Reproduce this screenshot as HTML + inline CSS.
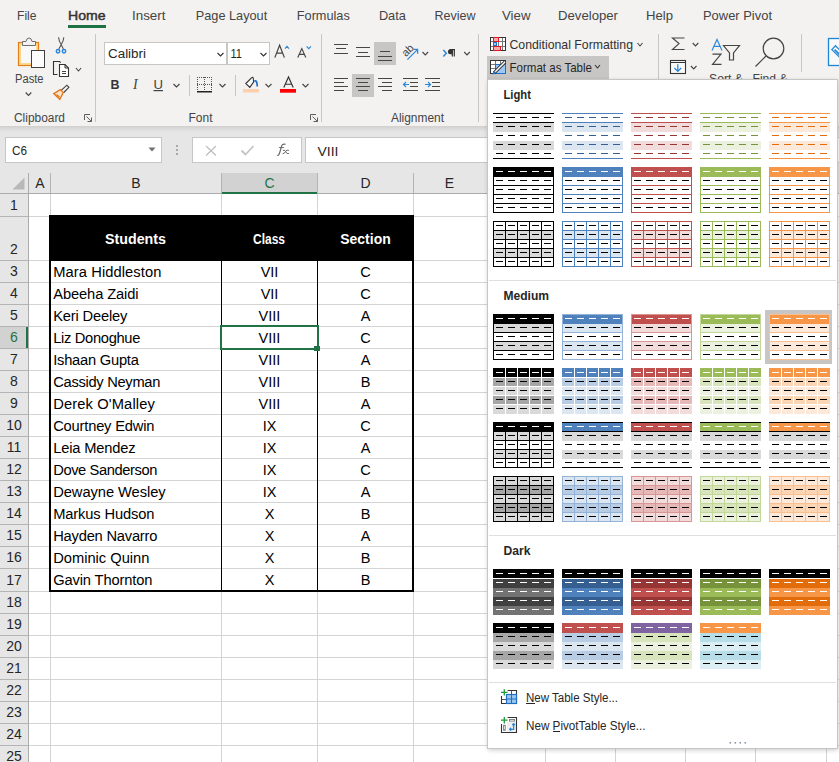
<!DOCTYPE html>
<html><head><meta charset="utf-8"><style>
html,body{margin:0;padding:0;width:839px;height:762px;overflow:hidden;background:#e6e6e6}
svg{position:absolute;left:0;top:0;display:block}
svg{font-family:"Liberation Sans",sans-serif}
</style></head><body>
<svg width="839" height="762" viewBox="0 0 839 762" shape-rendering="auto">
<rect x="0" y="0" width="839" height="762" fill="#e6e6e6" />
<rect x="0" y="0" width="839" height="126" fill="#f3f2f1" />
<defs><linearGradient id="rsh" x1="0" y1="0" x2="0" y2="1"><stop offset="0" stop-color="#d2d0ce"/><stop offset="1" stop-color="#e6e6e6"/></linearGradient><filter id="psh" x="-5%" y="-5%" width="115%" height="115%"><feGaussianBlur stdDeviation="2.5"/></filter></defs>
<rect x="0" y="126" width="839" height="6" fill="url(#rsh)" />
<text x="17.0" y="20" font-size="13" fill="#444444" textLength="19.5" lengthAdjust="spacingAndGlyphs" >File</text>
<text x="68.0" y="20" font-size="13" fill="#333333" textLength="37.5" lengthAdjust="spacingAndGlyphs" stroke="#333333" stroke-width="0.45">Home</text>
<text x="132.0" y="20" font-size="13" fill="#444444" textLength="33.5" lengthAdjust="spacingAndGlyphs" >Insert</text>
<text x="195.8" y="20" font-size="13" fill="#444444" textLength="71.4" lengthAdjust="spacingAndGlyphs" >Page Layout</text>
<text x="296.8" y="20" font-size="13" fill="#444444" textLength="53.0" lengthAdjust="spacingAndGlyphs" >Formulas</text>
<text x="378.9" y="20" font-size="13" fill="#444444" textLength="27.0" lengthAdjust="spacingAndGlyphs" >Data</text>
<text x="434.5" y="20" font-size="13" fill="#444444" textLength="41" lengthAdjust="spacingAndGlyphs" >Review</text>
<text x="502.0" y="20" font-size="13" fill="#444444" textLength="28.5" lengthAdjust="spacingAndGlyphs" >View</text>
<text x="558.0" y="20" font-size="13" fill="#444444" textLength="60.0" lengthAdjust="spacingAndGlyphs" >Developer</text>
<text x="646.0" y="20" font-size="13" fill="#444444" textLength="27.0" lengthAdjust="spacingAndGlyphs" >Help</text>
<text x="703.0" y="20" font-size="13" fill="#444444" textLength="69.0" lengthAdjust="spacingAndGlyphs" >Power Pivot</text>
<rect x="68" y="25" width="38" height="3" fill="#1e7145" />
<text x="14" y="122" font-size="12" fill="#444444" textLength="51" lengthAdjust="spacingAndGlyphs" >Clipboard</text>
<text x="188.5" y="121.5" font-size="12" fill="#444444" textLength="24" lengthAdjust="spacingAndGlyphs" >Font</text>
<text x="391" y="121.5" font-size="12" fill="#444444" textLength="53" lengthAdjust="spacingAndGlyphs" >Alignment</text>
<rect x="95" y="34" width="1" height="88" fill="#c8c6c4" />
<rect x="321" y="34" width="1" height="88" fill="#c8c6c4" />
<rect x="478" y="34" width="1" height="88" fill="#c8c6c4" />
<rect x="658" y="34" width="1" height="45" fill="#c8c6c4" />
<rect x="801" y="34" width="1" height="38" fill="#c8c6c4" />
<path d="M84.5 120 V114.5 H90" stroke="#605e5c" fill="none" stroke-width="1" />
<path d="M86.5 116.5 L91.5 121.5 M91.5 117.5 V121.5 H87.5" stroke="#605e5c" fill="none" stroke-width="1" />
<path d="M310.5 120 V114.5 H316" stroke="#605e5c" fill="none" stroke-width="1" />
<path d="M312.5 116.5 L317.5 121.5 M317.5 117.5 V121.5 H313.5" stroke="#605e5c" fill="none" stroke-width="1" />
<rect x="18.5" y="42.5" width="20" height="23" fill="#fcd98e" stroke="#e3801c" stroke-width="1.2"/>
<rect x="21" y="45" width="15" height="18" fill="#f8f8f8" />
<path d="M22.5 45.5 V41.5 H26 Q26.5 38 29 38 Q31.5 38 32 41.5 H35.5 V45.5 Z" stroke="#6e6e6e" fill="#f3f2f1" stroke-width="1" />
<rect x="31.5" y="50.5" width="13" height="17" fill="#fcfcfc" stroke="#404040" stroke-width="1"/>
<text x="15" y="83" font-size="12.5" fill="#444444" textLength="28.5" lengthAdjust="spacingAndGlyphs" >Paste</text>
<path d="M25.7 92.5 L28.5 95.5 L31.3 92.5" stroke="#444" fill="none" stroke-width="1.1" />
<path d="M58.6 37.3 Q58.8 41 61 44.2 L63.4 49 M63.8 37.3 Q63.6 41 61.4 44.2 L58.8 49" stroke="#555" fill="none" stroke-width="1.1" />
<circle cx="58" cy="51.2" r="1.7" fill="none" stroke="#2b88d8" stroke-width="1.5"/><circle cx="64" cy="51.2" r="1.7" fill="none" stroke="#2b88d8" stroke-width="1.5"/>
<path d="M57.5 74.5 H53.5 V61.5 H59.5 L60.7 62.7" stroke="#333" fill="none" stroke-width="1.1" />
<path d="M59.5 64.5 H65 L68.5 68 V76.5 H59.5 Z" stroke="#333" fill="#fff" stroke-width="1.1" />
<path d="M65 64.5 V68 H68.5" stroke="#333" fill="none" stroke-width="1" />
<rect x="62" y="71" width="4" height="1" fill="#444" />
<rect x="62" y="73" width="4" height="1" fill="#444" />
<path d="M75.9 68.0 L78.5 71.0 L81.1 68.0" stroke="#444" fill="none" stroke-width="1.1" />
<path d="M53.8 93.6 L60.3 89.6 L63.2 92.6 L59.8 99.3 Z" stroke="#e07a1f" fill="#fbe3cc" stroke-width="1.4" />
<path d="M56.5 94.5 L59.5 97" stroke="#e07a1f" fill="none" stroke-width="1.2" />
<path d="M61.5 90.2 L66.8 85.2 L68.9 87.3 L63.8 92.5" stroke="#444" fill="none" stroke-width="1.15" />
<rect x="104.5" y="42.5" width="122" height="22" fill="#ffffff" stroke="#c8c6c4" stroke-width="1"/>
<text x="108" y="58" font-size="12.5" fill="#262626" textLength="38" lengthAdjust="spacingAndGlyphs" >Calibri</text>
<path d="M217.5 53.0 L220.5 56.0 L223.5 53.0" stroke="#333" fill="none" stroke-width="1.1" />
<rect x="227.5" y="42.5" width="42" height="22" fill="#ffffff" stroke="#c8c6c4" stroke-width="1"/>
<text x="230.5" y="58" font-size="12.5" fill="#262626" textLength="11.5" lengthAdjust="spacingAndGlyphs" >11</text>
<path d="M260.5 53.0 L263.5 56.0 L266.5 53.0" stroke="#333" fill="none" stroke-width="1.1" />
<path d="M274.8 57.6 L279.6 45.2 L284.4 57.6 M276.5 53.2 H282.7" stroke="#444" fill="none" stroke-width="1.2" />
<path d="M285 48.6 L287 46.3 L289 48.6" stroke="#2b88d8" fill="none" stroke-width="1.2" />
<path d="M297.8 57.6 L301.8 48.6 L305.8 57.6 M299.2 54.4 H304.4" stroke="#444" fill="none" stroke-width="1.15" />
<path d="M306.6 46.4 L308.8 48.6 L311 46.4" stroke="#2b88d8" fill="none" stroke-width="1.2" />
<text x="110.5" y="89" font-size="13.5" fill="#333" font-weight="700" textLength="9" lengthAdjust="spacingAndGlyphs" >B</text>
<text x="133" y="89" font-size="14" fill="#444" font-style="italic" font-family="Liberation Serif">I</text>
<text x="153.5" y="88.5" font-size="13" fill="#444" textLength="9.5" lengthAdjust="spacingAndGlyphs" >U</text>
<rect x="153.5" y="90" width="9.5" height="1.2" fill="#444" />
<path d="M173.5 84.0 L176.5 87.0 L179.5 84.0" stroke="#444" fill="none" stroke-width="1.1" />
<rect x="189" y="75" width="1" height="21" fill="#c8c6c4" />
<rect x="197" y="77" width="1" height="1" fill="#555" />
<rect x="197" y="84" width="1" height="1" fill="#555" />
<rect x="199" y="77" width="1" height="1" fill="#555" />
<rect x="199" y="84" width="1" height="1" fill="#555" />
<rect x="201" y="77" width="1" height="1" fill="#555" />
<rect x="201" y="84" width="1" height="1" fill="#555" />
<rect x="203" y="77" width="1" height="1" fill="#555" />
<rect x="203" y="84" width="1" height="1" fill="#555" />
<rect x="205" y="77" width="1" height="1" fill="#555" />
<rect x="205" y="84" width="1" height="1" fill="#555" />
<rect x="207" y="77" width="1" height="1" fill="#555" />
<rect x="207" y="84" width="1" height="1" fill="#555" />
<rect x="209" y="77" width="1" height="1" fill="#555" />
<rect x="209" y="84" width="1" height="1" fill="#555" />
<rect x="211" y="77" width="1" height="1" fill="#555" />
<rect x="211" y="84" width="1" height="1" fill="#555" />
<rect x="197" y="77" width="1" height="1" fill="#555" />
<rect x="204" y="77" width="1" height="1" fill="#555" />
<rect x="211" y="77" width="1" height="1" fill="#555" />
<rect x="197" y="79" width="1" height="1" fill="#555" />
<rect x="204" y="79" width="1" height="1" fill="#555" />
<rect x="211" y="79" width="1" height="1" fill="#555" />
<rect x="197" y="81" width="1" height="1" fill="#555" />
<rect x="204" y="81" width="1" height="1" fill="#555" />
<rect x="211" y="81" width="1" height="1" fill="#555" />
<rect x="197" y="83" width="1" height="1" fill="#555" />
<rect x="204" y="83" width="1" height="1" fill="#555" />
<rect x="211" y="83" width="1" height="1" fill="#555" />
<rect x="197" y="85" width="1" height="1" fill="#555" />
<rect x="204" y="85" width="1" height="1" fill="#555" />
<rect x="211" y="85" width="1" height="1" fill="#555" />
<rect x="197" y="87" width="1" height="1" fill="#555" />
<rect x="204" y="87" width="1" height="1" fill="#555" />
<rect x="211" y="87" width="1" height="1" fill="#555" />
<rect x="197" y="89" width="1" height="1" fill="#555" />
<rect x="204" y="89" width="1" height="1" fill="#555" />
<rect x="211" y="89" width="1" height="1" fill="#555" />
<rect x="197" y="91" width="15" height="1.5" fill="#222" />
<path d="M219.5 84.0 L222.5 87.0 L225.5 84.0" stroke="#444" fill="none" stroke-width="1.1" />
<rect x="235" y="75" width="1" height="21" fill="#c8c6c4" />
<path d="M245.8 83.5 L251.5 77.8 Q253 76.3 253.3 78.5 L253.6 82 L249.8 87.3 Z" stroke="#333" fill="#fafafa" stroke-width="1.1" />
<path d="M254.3 81.2 Q257.2 79.6 257.3 86.5" stroke="#1f6fc5" fill="none" stroke-width="1.7" />
<rect x="243" y="89" width="16" height="3.5" fill="#f9d0b0" />
<path d="M265.5 84.0 L268.5 87.0 L271.5 84.0" stroke="#444" fill="none" stroke-width="1.1" />
<path d="M283.8 87.6 L288.5 77 L293.2 87.6 M285.3 84.2 H291.7" stroke="#333" fill="none" stroke-width="1.15" />
<rect x="280" y="89" width="16" height="3.7" fill="#ff0000" />
<path d="M302.5 84.0 L305.5 87.0 L308.5 84.0" stroke="#444" fill="none" stroke-width="1.1" />
<rect x="334" y="44" width="14" height="1" fill="#484644" />
<rect x="336" y="48" width="10" height="1" fill="#484644" />
<rect x="334" y="53" width="14" height="1" fill="#484644" />
<rect x="356" y="47" width="14" height="1" fill="#484644" />
<rect x="358" y="52" width="10" height="1" fill="#484644" />
<rect x="356" y="56" width="14" height="1" fill="#484644" />
<rect x="374" y="42" width="22" height="23" fill="#c8c6c4" />
<rect x="380" y="51" width="10" height="1" fill="#484644" />
<rect x="378" y="56" width="14" height="1" fill="#484644" />
<rect x="378" y="60" width="14" height="1" fill="#484644" />
<text x="0" y="3.8" font-size="11" fill="#444" text-anchor="middle" transform="translate(407.6 50.2) rotate(-45)">ab</text>
<path d="M407.4 59.6 L417.4 49.6 M413.3 49.4 H417.6 V53.7" stroke="#2b88d8" fill="none" stroke-width="1.3" />
<path d="M422.5 52.0 L425.3 55.0 L428.1 52.0" stroke="#444" fill="none" stroke-width="1.1" />
<path d="M443.3 50 L446.3 53.2 L443.3 56.4" stroke="#2b88d8" fill="none" stroke-width="1.5" />
<path d="M452.3 49.8 V56.6 M454.3 49.8 V56.6 M449.5 49.6 H455" stroke="#333" fill="none" stroke-width="1.2" />
<path d="M452.8 49.2 H450.5 Q447.9 49.3 447.9 51.8 Q447.9 54.3 450.5 54.3 H452.8 Z" fill="#333"/>
<path d="M464.2 52.0 L467 55.0 L469.8 52.0" stroke="#444" fill="none" stroke-width="1.1" />
<rect x="334" y="78" width="14" height="1" fill="#484644" />
<rect x="334" y="82" width="10" height="1" fill="#484644" />
<rect x="334" y="86" width="14" height="1" fill="#484644" />
<rect x="334" y="90" width="10" height="1" fill="#484644" />
<rect x="352" y="74" width="22" height="23" fill="#c8c6c4" />
<rect x="356" y="78" width="14" height="1" fill="#484644" />
<rect x="358" y="82" width="10" height="1" fill="#484644" />
<rect x="356" y="86" width="14" height="1" fill="#484644" />
<rect x="358" y="90" width="10" height="1" fill="#484644" />
<rect x="378" y="78" width="14" height="1" fill="#484644" />
<rect x="382" y="82" width="10" height="1" fill="#484644" />
<rect x="378" y="86" width="14" height="1" fill="#484644" />
<rect x="382" y="90" width="10" height="1" fill="#484644" />
<rect x="403" y="78" width="15" height="1" fill="#484644" />
<rect x="410" y="82" width="8" height="1" fill="#484644" />
<rect x="410" y="86" width="8" height="1" fill="#484644" />
<rect x="403" y="90" width="15" height="1" fill="#484644" />
<path d="M409 84.5 H403.5 M406 82 L403.5 84.5 L406 87" stroke="#2b88d8" fill="none" stroke-width="1.2" />
<rect x="425" y="78" width="15" height="1" fill="#484644" />
<rect x="432" y="82" width="8" height="1" fill="#484644" />
<rect x="432" y="86" width="8" height="1" fill="#484644" />
<rect x="425" y="90" width="15" height="1" fill="#484644" />
<path d="M425 84.5 H430.5 M428 82 L430.5 84.5 L428 87" stroke="#2b88d8" fill="none" stroke-width="1.2" />
<rect x="490.5" y="37.5" width="15" height="13" fill="#ffffff" stroke="#333" stroke-width="1"/>
<rect x="498" y="38" width="1" height="12" fill="#777" />
<rect x="502" y="38" width="1" height="12" fill="#777" />
<rect x="491" y="41" width="14" height="1" fill="#777" />
<rect x="491" y="46" width="14" height="1" fill="#777" />
<rect x="493.5" y="37.5" width="5" height="4" fill="#f7a8ae" stroke="#e01b24" stroke-width="1"/>
<rect x="493.5" y="42.5" width="3" height="3" fill="#9cc9f3" stroke="#1e6fc5" stroke-width="1"/>
<rect x="493.5" y="46.5" width="7" height="4" fill="#f7a8ae" stroke="#e01b24" stroke-width="1"/>
<text x="509.5" y="49.3" font-size="13" fill="#323130" textLength="123.5" lengthAdjust="spacingAndGlyphs" >Conditional Formatting</text>
<path d="M637.5 43.0 L640 46.0 L642.5 43.0" stroke="#444" fill="none" stroke-width="1.1" />
<rect x="487" y="56" width="122" height="23" fill="#c8c6c4" />
<rect x="490.5" y="60.5" width="15" height="13" fill="#ffffff" stroke="#333" stroke-width="1"/>
<rect x="491" y="64" width="14" height="1" fill="#777" />
<rect x="491" y="68" width="14" height="1" fill="#777" />
<rect x="495" y="61" width="1" height="12" fill="#777" />
<rect x="500" y="61" width="1" height="12" fill="#777" />
<rect x="495.5" y="64.5" width="10" height="9" fill="#9cc9f3" stroke="#1e6fc5" stroke-width="1"/>
<path d="M494 73 L505 62" stroke="#333" fill="none" stroke-width="3.2" />
<path d="M494 73 L505 62" stroke="#ffffff" fill="none" stroke-width="1.4" />
<path d="M492 74.5 Q493 71 495.5 71.5 Q496.5 73.5 492 74.5 Z" stroke="none" fill="#1e6fc5" stroke-width="1" />
<text x="509.5" y="71.8" font-size="13" fill="#262626" textLength="82.5" lengthAdjust="spacingAndGlyphs" >Format as Table</text>
<path d="M595.0 65.0 L597.5 68.0 L600.0 65.0" stroke="#333" fill="none" stroke-width="1.1" />
<path d="M684.5 38 H672.5 L679 43.6 L672.5 49.5 H684.5" stroke="#444" fill="none" stroke-width="1.15" />
<path d="M692.7 43.0 L695.5 46.0 L698.3 43.0" stroke="#444" fill="none" stroke-width="1.1" />
<rect x="670.5" y="60.5" width="15" height="13" fill="#f9f9f9" stroke="#333" stroke-width="1.1"/>
<rect x="671" y="62" width="14" height="1" fill="#333" />
<path d="M677.8 64.3 V71.3 M674.4 68 L677.8 71.4 L681.2 68" stroke="#2b88d8" fill="none" stroke-width="1.3" />
<path d="M690.9000000000001 66.0 L693.7 69.0 L696.5 66.0" stroke="#444" fill="none" stroke-width="1.1" />
<path d="M712 50.6 L717 39.4 L722 50.6 M713.9 46.3 H720.1" stroke="#2b88d8" fill="none" stroke-width="1.15" />
<path d="M712.5 54.1 H721 L712.5 64.4 H721.5" stroke="#444" fill="none" stroke-width="1.15" />
<path d="M723.5 45.5 H739.5 L733.5 53 V60 H729.5 V53 Z" stroke="#444" fill="none" stroke-width="1.2" />
<circle cx="773.5" cy="48.5" r="10.3" fill="none" stroke="#444" stroke-width="1.2"/>
<path d="M755.5 66.5 L766 56" stroke="#444" fill="none" stroke-width="1.2" />
<clipPath id="cut78"><rect x="0" y="0" width="839" height="79"/></clipPath>
<text x="709" y="83" font-size="13" fill="#444" textLength="34" lengthAdjust="spacingAndGlyphs" clip-path="url(#cut78)">Sort &amp;</text>
<text x="752.5" y="83" font-size="13" fill="#444" textLength="35" lengthAdjust="spacingAndGlyphs" clip-path="url(#cut78)">Find &amp;</text>
<rect x="828.5" y="38.5" width="14" height="27" fill="#f9f9f9" stroke="#1e88d8" stroke-width="1.3"/>
<path d="M831.8 49.6 L835.5 45.8 L843 53.3 L839.3 57 Z" stroke="#1e88d8" fill="none" stroke-width="1.3" />
<path d="M834.6 49.6 L841 56" stroke="#1e88d8" fill="none" stroke-width="1.6" />
<rect x="5.5" y="137.5" width="156" height="25" fill="#ffffff" stroke="#c6c6c6" stroke-width="1"/>
<text x="12" y="155" font-size="12.5" fill="#262626" textLength="15" lengthAdjust="spacingAndGlyphs" >C6</text>
<path d="M148.5 147.5 H155.5 L152 151.5 Z" stroke="none" fill="#6e6e6e" stroke-width="1" />
<rect x="176" y="145" width="2" height="2" fill="#a8a8a8" />
<rect x="176" y="149" width="2" height="2" fill="#a8a8a8" />
<rect x="176" y="153" width="2" height="2" fill="#a8a8a8" />
<rect x="192.5" y="137.5" width="109" height="25" fill="#ffffff" stroke="#c6c6c6" stroke-width="1"/>
<path d="M206 146 L216 155.5 M216 146 L206 155.5" stroke="#bdbdbd" fill="none" stroke-width="1.2" />
<path d="M241.5 150.5 L245.5 154.5 L253.5 146" stroke="#c4c4c4" fill="none" stroke-width="1.8" />
<path d="M277.2 155.3 Q278.9 155.9 279.9 152 L281.7 145.6 Q282.4 143.6 285.6 144.2" stroke="#666" fill="none" stroke-width="1.15" />
<path d="M279.1 147.6 H283.9" stroke="#666" fill="none" stroke-width="1" />
<path d="M282.6 153.7 Q284.3 154 285.8 151.2 Q286.8 149.6 288.9 150.4 M282.9 150.4 Q285 149.6 285.9 152 Q286.7 154.2 288.9 153.5" stroke="#666" fill="none" stroke-width="1" />
<rect x="305.5" y="137.5" width="600" height="25" fill="#ffffff" stroke="#c6c6c6" stroke-width="1"/>
<text x="317.5" y="155.5" font-size="12.5" fill="#262626" textLength="21" lengthAdjust="spacingAndGlyphs" >VIII</text>
<rect x="0" y="173" width="839" height="20" fill="#e6e6e6" />
<rect x="0" y="193" width="839" height="1" fill="#ababab" />
<path d="M24.5 177.5 V189.5 H12.5 Z" stroke="none" fill="#b8b8b8" stroke-width="1" />
<rect x="28" y="173" width="1" height="589" fill="#ababab" />
<rect x="50" y="173" width="1" height="20" fill="#b4b4b4" />
<rect x="221" y="173" width="1" height="20" fill="#b4b4b4" />
<rect x="317" y="173" width="1" height="20" fill="#b4b4b4" />
<rect x="413" y="173" width="1" height="20" fill="#b4b4b4" />
<rect x="545" y="173" width="1" height="20" fill="#b4b4b4" />
<rect x="615" y="173" width="1" height="20" fill="#b4b4b4" />
<rect x="685" y="173" width="1" height="20" fill="#b4b4b4" />
<rect x="755" y="173" width="1" height="20" fill="#b4b4b4" />
<rect x="826" y="173" width="1" height="20" fill="#b4b4b4" />
<rect x="222" y="173" width="95" height="19" fill="#d2d2d2" />
<rect x="222" y="192" width="95" height="2" fill="#217346" />
<text x="40" y="188.3" font-size="14" fill="#262626" text-anchor="middle" >A</text>
<text x="136" y="188.3" font-size="14" fill="#262626" text-anchor="middle" >B</text>
<text x="269.5" y="188.3" font-size="14" fill="#217346" text-anchor="middle" >C</text>
<text x="365.5" y="188.3" font-size="14" fill="#262626" text-anchor="middle" >D</text>
<text x="449.5" y="188.3" font-size="14" fill="#262626" text-anchor="middle" >E</text>
<rect x="29" y="194" width="810" height="568" fill="#ffffff" />
<rect x="29" y="216" width="810" height="1" fill="#d4d4d4" />
<rect x="29" y="260" width="810" height="1" fill="#d4d4d4" />
<rect x="29" y="282" width="810" height="1" fill="#d4d4d4" />
<rect x="29" y="304" width="810" height="1" fill="#d4d4d4" />
<rect x="29" y="326" width="810" height="1" fill="#d4d4d4" />
<rect x="29" y="348" width="810" height="1" fill="#d4d4d4" />
<rect x="29" y="370" width="810" height="1" fill="#d4d4d4" />
<rect x="29" y="392" width="810" height="1" fill="#d4d4d4" />
<rect x="29" y="414" width="810" height="1" fill="#d4d4d4" />
<rect x="29" y="436" width="810" height="1" fill="#d4d4d4" />
<rect x="29" y="458" width="810" height="1" fill="#d4d4d4" />
<rect x="29" y="480" width="810" height="1" fill="#d4d4d4" />
<rect x="29" y="502" width="810" height="1" fill="#d4d4d4" />
<rect x="29" y="524" width="810" height="1" fill="#d4d4d4" />
<rect x="29" y="546" width="810" height="1" fill="#d4d4d4" />
<rect x="29" y="568" width="810" height="1" fill="#d4d4d4" />
<rect x="29" y="591" width="810" height="1" fill="#d4d4d4" />
<rect x="29" y="613" width="810" height="1" fill="#d4d4d4" />
<rect x="29" y="635" width="810" height="1" fill="#d4d4d4" />
<rect x="29" y="657" width="810" height="1" fill="#d4d4d4" />
<rect x="29" y="679" width="810" height="1" fill="#d4d4d4" />
<rect x="29" y="701" width="810" height="1" fill="#d4d4d4" />
<rect x="29" y="723" width="810" height="1" fill="#d4d4d4" />
<rect x="29" y="745" width="810" height="1" fill="#d4d4d4" />
<rect x="50" y="194" width="1" height="568" fill="#d4d4d4" />
<rect x="221" y="194" width="1" height="568" fill="#d4d4d4" />
<rect x="317" y="194" width="1" height="568" fill="#d4d4d4" />
<rect x="413" y="194" width="1" height="568" fill="#d4d4d4" />
<rect x="545" y="194" width="1" height="568" fill="#d4d4d4" />
<rect x="615" y="194" width="1" height="568" fill="#d4d4d4" />
<rect x="685" y="194" width="1" height="568" fill="#d4d4d4" />
<rect x="755" y="194" width="1" height="568" fill="#d4d4d4" />
<rect x="826" y="194" width="1" height="568" fill="#d4d4d4" />
<rect x="0" y="194" width="28" height="568" fill="#e6e6e6" />
<rect x="0" y="326" width="28" height="22" fill="#d2d2d2" />
<rect x="26" y="326" width="2" height="22" fill="#217346" />
<rect x="0" y="216" width="28" height="1" fill="#b4b4b4" />
<rect x="0" y="260" width="28" height="1" fill="#b4b4b4" />
<rect x="0" y="282" width="28" height="1" fill="#b4b4b4" />
<rect x="0" y="304" width="28" height="1" fill="#b4b4b4" />
<rect x="0" y="326" width="28" height="1" fill="#b4b4b4" />
<rect x="0" y="348" width="28" height="1" fill="#b4b4b4" />
<rect x="0" y="370" width="28" height="1" fill="#b4b4b4" />
<rect x="0" y="392" width="28" height="1" fill="#b4b4b4" />
<rect x="0" y="414" width="28" height="1" fill="#b4b4b4" />
<rect x="0" y="436" width="28" height="1" fill="#b4b4b4" />
<rect x="0" y="458" width="28" height="1" fill="#b4b4b4" />
<rect x="0" y="480" width="28" height="1" fill="#b4b4b4" />
<rect x="0" y="502" width="28" height="1" fill="#b4b4b4" />
<rect x="0" y="524" width="28" height="1" fill="#b4b4b4" />
<rect x="0" y="546" width="28" height="1" fill="#b4b4b4" />
<rect x="0" y="568" width="28" height="1" fill="#b4b4b4" />
<rect x="0" y="591" width="28" height="1" fill="#b4b4b4" />
<rect x="0" y="613" width="28" height="1" fill="#b4b4b4" />
<rect x="0" y="635" width="28" height="1" fill="#b4b4b4" />
<rect x="0" y="657" width="28" height="1" fill="#b4b4b4" />
<rect x="0" y="679" width="28" height="1" fill="#b4b4b4" />
<rect x="0" y="701" width="28" height="1" fill="#b4b4b4" />
<rect x="0" y="723" width="28" height="1" fill="#b4b4b4" />
<rect x="0" y="745" width="28" height="1" fill="#b4b4b4" />
<text x="14" y="210.2" font-size="14" fill="#262626" text-anchor="middle" >1</text>
<text x="14" y="254.2" font-size="14" fill="#262626" text-anchor="middle" >2</text>
<text x="14" y="276.2" font-size="14" fill="#262626" text-anchor="middle" >3</text>
<text x="14" y="298.2" font-size="14" fill="#262626" text-anchor="middle" >4</text>
<text x="14" y="320.2" font-size="14" fill="#262626" text-anchor="middle" >5</text>
<text x="14" y="342.2" font-size="14" fill="#217346" text-anchor="middle" >6</text>
<text x="14" y="364.2" font-size="14" fill="#262626" text-anchor="middle" >7</text>
<text x="14" y="386.2" font-size="14" fill="#262626" text-anchor="middle" >8</text>
<text x="14" y="408.2" font-size="14" fill="#262626" text-anchor="middle" >9</text>
<text x="14" y="430.2" font-size="14" fill="#262626" text-anchor="middle" >10</text>
<text x="14" y="452.2" font-size="14" fill="#262626" text-anchor="middle" >11</text>
<text x="14" y="474.2" font-size="14" fill="#262626" text-anchor="middle" >12</text>
<text x="14" y="496.2" font-size="14" fill="#262626" text-anchor="middle" >13</text>
<text x="14" y="518.2" font-size="14" fill="#262626" text-anchor="middle" >14</text>
<text x="14" y="540.2" font-size="14" fill="#262626" text-anchor="middle" >15</text>
<text x="14" y="562.2" font-size="14" fill="#262626" text-anchor="middle" >16</text>
<text x="14" y="585.2" font-size="14" fill="#262626" text-anchor="middle" >17</text>
<text x="14" y="607.2" font-size="14" fill="#262626" text-anchor="middle" >18</text>
<text x="14" y="629.2" font-size="14" fill="#262626" text-anchor="middle" >19</text>
<text x="14" y="651.2" font-size="14" fill="#262626" text-anchor="middle" >20</text>
<text x="14" y="673.2" font-size="14" fill="#262626" text-anchor="middle" >21</text>
<text x="14" y="695.2" font-size="14" fill="#262626" text-anchor="middle" >22</text>
<text x="14" y="717.2" font-size="14" fill="#262626" text-anchor="middle" >23</text>
<text x="14" y="739.2" font-size="14" fill="#262626" text-anchor="middle" >24</text>
<text x="14" y="761.2" font-size="14" fill="#262626" text-anchor="middle" >25</text>
<rect x="49" y="215" width="365" height="46" fill="#000000" />
<text x="135.5" y="243.9" font-size="14" fill="#ffffff" font-weight="700" text-anchor="middle" textLength="61" lengthAdjust="spacingAndGlyphs" >Students</text>
<text x="269" y="243.9" font-size="14" fill="#ffffff" font-weight="700" text-anchor="middle" textLength="32" lengthAdjust="spacingAndGlyphs" >Class</text>
<text x="365.5" y="243.9" font-size="14" fill="#ffffff" font-weight="700" text-anchor="middle" textLength="50.5" lengthAdjust="spacingAndGlyphs" >Section</text>
<text x="53.2" y="276.5" font-size="14.7" fill="#000000" textLength="108.2" lengthAdjust="spacing" >Mara Hiddleston</text>
<text x="269.5" y="276.5" font-size="14.5" fill="#000000" text-anchor="middle" >VII</text>
<text x="365.5" y="276.5" font-size="14.5" fill="#000000" text-anchor="middle" >C</text>
<text x="53.2" y="298.5" font-size="14.7" fill="#000000" textLength="85.4" lengthAdjust="spacing" >Abeeha Zaidi</text>
<text x="269.5" y="298.5" font-size="14.5" fill="#000000" text-anchor="middle" >VII</text>
<text x="365.5" y="298.5" font-size="14.5" fill="#000000" text-anchor="middle" >C</text>
<text x="53.2" y="320.5" font-size="14.7" fill="#000000" textLength="74.2" lengthAdjust="spacing" >Keri Deeley</text>
<text x="269.5" y="320.5" font-size="14.5" fill="#000000" text-anchor="middle" >VIII</text>
<text x="365.5" y="320.5" font-size="14.5" fill="#000000" text-anchor="middle" >A</text>
<text x="53.2" y="342.5" font-size="14.7" fill="#000000" textLength="87.2" lengthAdjust="spacing" >Liz Donoghue</text>
<text x="269.5" y="342.5" font-size="14.5" fill="#000000" text-anchor="middle" >VIII</text>
<text x="365.5" y="342.5" font-size="14.5" fill="#000000" text-anchor="middle" >C</text>
<text x="53.2" y="364.5" font-size="14.7" fill="#000000" textLength="85.7" lengthAdjust="spacing" >Ishaan Gupta</text>
<text x="269.5" y="364.5" font-size="14.5" fill="#000000" text-anchor="middle" >VIII</text>
<text x="365.5" y="364.5" font-size="14.5" fill="#000000" text-anchor="middle" >A</text>
<text x="53.2" y="386.5" font-size="14.7" fill="#000000" textLength="107.2" lengthAdjust="spacing" >Cassidy Neyman</text>
<text x="269.5" y="386.5" font-size="14.5" fill="#000000" text-anchor="middle" >VIII</text>
<text x="365.5" y="386.5" font-size="14.5" fill="#000000" text-anchor="middle" >B</text>
<text x="53.2" y="408.5" font-size="14.7" fill="#000000" textLength="101.60000000000001" lengthAdjust="spacing" >Derek O'Malley</text>
<text x="269.5" y="408.5" font-size="14.5" fill="#000000" text-anchor="middle" >VIII</text>
<text x="365.5" y="408.5" font-size="14.5" fill="#000000" text-anchor="middle" >A</text>
<text x="53.2" y="430.5" font-size="14.7" fill="#000000" textLength="101.2" lengthAdjust="spacing" >Courtney Edwin</text>
<text x="269.5" y="430.5" font-size="14.5" fill="#000000" text-anchor="middle" >IX</text>
<text x="365.5" y="430.5" font-size="14.5" fill="#000000" text-anchor="middle" >C</text>
<text x="53.2" y="452.5" font-size="14.7" fill="#000000" textLength="82.5" lengthAdjust="spacing" >Leia Mendez</text>
<text x="269.5" y="452.5" font-size="14.5" fill="#000000" text-anchor="middle" >IX</text>
<text x="365.5" y="452.5" font-size="14.5" fill="#000000" text-anchor="middle" >A</text>
<text x="53.2" y="474.5" font-size="14.7" fill="#000000" textLength="104.2" lengthAdjust="spacing" >Dove Sanderson</text>
<text x="269.5" y="474.5" font-size="14.5" fill="#000000" text-anchor="middle" >IX</text>
<text x="365.5" y="474.5" font-size="14.5" fill="#000000" text-anchor="middle" >C</text>
<text x="53.2" y="496.5" font-size="14.7" fill="#000000" textLength="112.4" lengthAdjust="spacing" >Dewayne Wesley</text>
<text x="269.5" y="496.5" font-size="14.5" fill="#000000" text-anchor="middle" >IX</text>
<text x="365.5" y="496.5" font-size="14.5" fill="#000000" text-anchor="middle" >A</text>
<text x="53.2" y="518.5" font-size="14.7" fill="#000000" textLength="101.2" lengthAdjust="spacing" >Markus Hudson</text>
<text x="269.5" y="518.5" font-size="14.5" fill="#000000" text-anchor="middle" >X</text>
<text x="365.5" y="518.5" font-size="14.5" fill="#000000" text-anchor="middle" >B</text>
<text x="53.2" y="540.5" font-size="14.7" fill="#000000" textLength="104.2" lengthAdjust="spacing" >Hayden Navarro</text>
<text x="269.5" y="540.5" font-size="14.5" fill="#000000" text-anchor="middle" >X</text>
<text x="365.5" y="540.5" font-size="14.5" fill="#000000" text-anchor="middle" >A</text>
<text x="53.2" y="562.5" font-size="14.7" fill="#000000" textLength="96.2" lengthAdjust="spacing" >Dominic Quinn</text>
<text x="269.5" y="562.5" font-size="14.5" fill="#000000" text-anchor="middle" >X</text>
<text x="365.5" y="562.5" font-size="14.5" fill="#000000" text-anchor="middle" >B</text>
<text x="53.2" y="584.5" font-size="14.7" fill="#000000" textLength="99.2" lengthAdjust="spacing" >Gavin Thornton</text>
<text x="269.5" y="584.5" font-size="14.5" fill="#000000" text-anchor="middle" >X</text>
<text x="365.5" y="584.5" font-size="14.5" fill="#000000" text-anchor="middle" >B</text>
<rect x="49" y="261" width="2" height="331" fill="#000" />
<rect x="412" y="261" width="2" height="331" fill="#000" />
<rect x="49" y="590" width="365" height="2" fill="#000" />
<rect x="221" y="261" width="1" height="329" fill="#000" />
<rect x="317" y="261" width="1" height="329" fill="#000" />
<rect x="221" y="326" width="97" height="23" fill="none" stroke="#217346" stroke-width="2"/>
<rect x="314" y="346" width="6" height="5" fill="#217346" />
<rect x="313" y="345" width="1" height="1" fill="#fff" />
<rect x="488" y="81" width="350" height="669" fill="#000" opacity="0.22" filter="url(#psh)"/>
<rect x="487.5" y="79.5" width="350" height="669" fill="#ffffff" stroke="#c8c6c4" stroke-width="1"/>
<text x="503.5" y="98.7" font-size="12" fill="#262626" font-weight="700" textLength="27.5" lengthAdjust="spacingAndGlyphs" >Light</text>
<rect x="489" y="280" width="347" height="1" fill="#e1dfdd" />
<text x="503.5" y="299.6" font-size="12" fill="#262626" font-weight="700" textLength="45.5" lengthAdjust="spacingAndGlyphs" >Medium</text>
<rect x="489" y="535" width="347" height="1" fill="#e1dfdd" />
<text x="503.5" y="554.6" font-size="12" fill="#262626" font-weight="700" textLength="27" lengthAdjust="spacingAndGlyphs" >Dark</text>
<rect x="489" y="682" width="347" height="1" fill="#e1dfdd" />
<rect x="765" y="310" width="67" height="54" fill="#c8c6c4" />
<rect x="769" y="314" width="61" height="46" fill="#ffffff" />
<rect x="493" y="123" width="61" height="9" fill="#d9d9d9" />
<rect x="493" y="141" width="61" height="9" fill="#d9d9d9" />
<rect x="493" y="113" width="61" height="1" fill="#000000" />
<rect x="493" y="122" width="61" height="1" fill="#000000" />
<rect x="493" y="158" width="61" height="1" fill="#000000" />
<rect x="496" y="117" width="7" height="1" fill="#000000" />
<rect x="508" y="117" width="7" height="1" fill="#000000" />
<rect x="520" y="117" width="7" height="1" fill="#000000" />
<rect x="532" y="117" width="7" height="1" fill="#000000" />
<rect x="544" y="117" width="7" height="1" fill="#000000" />
<rect x="496" y="126" width="7" height="1" fill="#000000" />
<rect x="508" y="126" width="7" height="1" fill="#000000" />
<rect x="520" y="126" width="7" height="1" fill="#000000" />
<rect x="532" y="126" width="7" height="1" fill="#000000" />
<rect x="544" y="126" width="7" height="1" fill="#000000" />
<rect x="496" y="135" width="7" height="1" fill="#000000" />
<rect x="508" y="135" width="7" height="1" fill="#000000" />
<rect x="520" y="135" width="7" height="1" fill="#000000" />
<rect x="532" y="135" width="7" height="1" fill="#000000" />
<rect x="544" y="135" width="7" height="1" fill="#000000" />
<rect x="496" y="144" width="7" height="1" fill="#000000" />
<rect x="508" y="144" width="7" height="1" fill="#000000" />
<rect x="520" y="144" width="7" height="1" fill="#000000" />
<rect x="532" y="144" width="7" height="1" fill="#000000" />
<rect x="544" y="144" width="7" height="1" fill="#000000" />
<rect x="496" y="153" width="7" height="1" fill="#000000" />
<rect x="508" y="153" width="7" height="1" fill="#000000" />
<rect x="520" y="153" width="7" height="1" fill="#000000" />
<rect x="532" y="153" width="7" height="1" fill="#000000" />
<rect x="544" y="153" width="7" height="1" fill="#000000" />
<rect x="493" y="167" width="61" height="10" fill="#000000" />
<rect x="493" y="185" width="61" height="1" fill="#000000" />
<rect x="493" y="194" width="61" height="1" fill="#000000" />
<rect x="493" y="203" width="61" height="1" fill="#000000" />
<rect x="493.5" y="167.5" width="60" height="45" fill="none" stroke="#000000" stroke-width="1"/>
<rect x="496" y="171" width="7" height="1" fill="#ffffff" />
<rect x="508" y="171" width="7" height="1" fill="#ffffff" />
<rect x="520" y="171" width="7" height="1" fill="#ffffff" />
<rect x="532" y="171" width="7" height="1" fill="#ffffff" />
<rect x="544" y="171" width="7" height="1" fill="#ffffff" />
<rect x="496" y="180" width="7" height="1" fill="#000" />
<rect x="508" y="180" width="7" height="1" fill="#000" />
<rect x="520" y="180" width="7" height="1" fill="#000" />
<rect x="532" y="180" width="7" height="1" fill="#000" />
<rect x="544" y="180" width="7" height="1" fill="#000" />
<rect x="496" y="189" width="7" height="1" fill="#000" />
<rect x="508" y="189" width="7" height="1" fill="#000" />
<rect x="520" y="189" width="7" height="1" fill="#000" />
<rect x="532" y="189" width="7" height="1" fill="#000" />
<rect x="544" y="189" width="7" height="1" fill="#000" />
<rect x="496" y="198" width="7" height="1" fill="#000" />
<rect x="508" y="198" width="7" height="1" fill="#000" />
<rect x="520" y="198" width="7" height="1" fill="#000" />
<rect x="532" y="198" width="7" height="1" fill="#000" />
<rect x="544" y="198" width="7" height="1" fill="#000" />
<rect x="496" y="207" width="7" height="1" fill="#000" />
<rect x="508" y="207" width="7" height="1" fill="#000" />
<rect x="520" y="207" width="7" height="1" fill="#000" />
<rect x="532" y="207" width="7" height="1" fill="#000" />
<rect x="544" y="207" width="7" height="1" fill="#000" />
<rect x="493" y="230" width="61" height="9" fill="#d9d9d9" />
<rect x="493" y="248" width="61" height="9" fill="#d9d9d9" />
<rect x="493" y="230" width="61" height="1" fill="#000000" />
<rect x="493" y="239" width="61" height="1" fill="#000000" />
<rect x="493" y="248" width="61" height="1" fill="#000000" />
<rect x="493" y="257" width="61" height="1" fill="#000000" />
<rect x="505" y="221" width="1" height="46" fill="#000000" />
<rect x="517" y="221" width="1" height="46" fill="#000000" />
<rect x="529" y="221" width="1" height="46" fill="#000000" />
<rect x="541" y="221" width="1" height="46" fill="#000000" />
<rect x="493.5" y="221.5" width="60" height="45" fill="none" stroke="#000000" stroke-width="1"/>
<rect x="496" y="225" width="7" height="1" fill="#000" />
<rect x="508" y="225" width="7" height="1" fill="#000" />
<rect x="520" y="225" width="7" height="1" fill="#000" />
<rect x="532" y="225" width="7" height="1" fill="#000" />
<rect x="544" y="225" width="7" height="1" fill="#000" />
<rect x="496" y="234" width="7" height="1" fill="#000" />
<rect x="508" y="234" width="7" height="1" fill="#000" />
<rect x="520" y="234" width="7" height="1" fill="#000" />
<rect x="532" y="234" width="7" height="1" fill="#000" />
<rect x="544" y="234" width="7" height="1" fill="#000" />
<rect x="496" y="243" width="7" height="1" fill="#000" />
<rect x="508" y="243" width="7" height="1" fill="#000" />
<rect x="520" y="243" width="7" height="1" fill="#000" />
<rect x="532" y="243" width="7" height="1" fill="#000" />
<rect x="544" y="243" width="7" height="1" fill="#000" />
<rect x="496" y="252" width="7" height="1" fill="#000" />
<rect x="508" y="252" width="7" height="1" fill="#000" />
<rect x="520" y="252" width="7" height="1" fill="#000" />
<rect x="532" y="252" width="7" height="1" fill="#000" />
<rect x="544" y="252" width="7" height="1" fill="#000" />
<rect x="496" y="261" width="7" height="1" fill="#000" />
<rect x="508" y="261" width="7" height="1" fill="#000" />
<rect x="520" y="261" width="7" height="1" fill="#000" />
<rect x="532" y="261" width="7" height="1" fill="#000" />
<rect x="544" y="261" width="7" height="1" fill="#000" />
<rect x="493" y="314" width="61" height="10" fill="#000000" />
<rect x="493" y="324" width="61" height="8" fill="#d9d9d9" />
<rect x="493" y="342" width="61" height="8" fill="#d9d9d9" />
<rect x="493" y="332" width="61" height="1" fill="#000000" />
<rect x="493" y="341" width="61" height="1" fill="#000000" />
<rect x="493" y="350" width="61" height="1" fill="#000000" />
<rect x="493.5" y="314.5" width="60" height="45" fill="none" stroke="#000000" stroke-width="1"/>
<rect x="496" y="318" width="7" height="1" fill="#ffffff" />
<rect x="508" y="318" width="7" height="1" fill="#ffffff" />
<rect x="520" y="318" width="7" height="1" fill="#ffffff" />
<rect x="532" y="318" width="7" height="1" fill="#ffffff" />
<rect x="544" y="318" width="7" height="1" fill="#ffffff" />
<rect x="496" y="327" width="7" height="1" fill="#000" />
<rect x="508" y="327" width="7" height="1" fill="#000" />
<rect x="520" y="327" width="7" height="1" fill="#000" />
<rect x="532" y="327" width="7" height="1" fill="#000" />
<rect x="544" y="327" width="7" height="1" fill="#000" />
<rect x="496" y="336" width="7" height="1" fill="#000" />
<rect x="508" y="336" width="7" height="1" fill="#000" />
<rect x="520" y="336" width="7" height="1" fill="#000" />
<rect x="532" y="336" width="7" height="1" fill="#000" />
<rect x="544" y="336" width="7" height="1" fill="#000" />
<rect x="496" y="345" width="7" height="1" fill="#000" />
<rect x="508" y="345" width="7" height="1" fill="#000" />
<rect x="520" y="345" width="7" height="1" fill="#000" />
<rect x="532" y="345" width="7" height="1" fill="#000" />
<rect x="544" y="345" width="7" height="1" fill="#000" />
<rect x="496" y="354" width="7" height="1" fill="#000" />
<rect x="508" y="354" width="7" height="1" fill="#000" />
<rect x="520" y="354" width="7" height="1" fill="#000" />
<rect x="532" y="354" width="7" height="1" fill="#000" />
<rect x="544" y="354" width="7" height="1" fill="#000" />
<rect x="493" y="368" width="61" height="10" fill="#000000" />
<rect x="493" y="377" width="61" height="10" fill="#a6a6a6" />
<rect x="493" y="386" width="61" height="10" fill="#d9d9d9" />
<rect x="493" y="395" width="61" height="10" fill="#a6a6a6" />
<rect x="493" y="404" width="61" height="10" fill="#d9d9d9" />
<rect x="493" y="377" width="61" height="1" fill="#ffffff" />
<rect x="493" y="386" width="61" height="1" fill="#ffffff" />
<rect x="493" y="395" width="61" height="1" fill="#ffffff" />
<rect x="493" y="404" width="61" height="1" fill="#ffffff" />
<rect x="505" y="368" width="1" height="46" fill="#ffffff" />
<rect x="517" y="368" width="1" height="46" fill="#ffffff" />
<rect x="529" y="368" width="1" height="46" fill="#ffffff" />
<rect x="541" y="368" width="1" height="46" fill="#ffffff" />
<rect x="496" y="372" width="7" height="1" fill="#ffffff" />
<rect x="508" y="372" width="7" height="1" fill="#ffffff" />
<rect x="520" y="372" width="7" height="1" fill="#ffffff" />
<rect x="532" y="372" width="7" height="1" fill="#ffffff" />
<rect x="544" y="372" width="7" height="1" fill="#ffffff" />
<rect x="496" y="381" width="7" height="1" fill="#000" />
<rect x="508" y="381" width="7" height="1" fill="#000" />
<rect x="520" y="381" width="7" height="1" fill="#000" />
<rect x="532" y="381" width="7" height="1" fill="#000" />
<rect x="544" y="381" width="7" height="1" fill="#000" />
<rect x="496" y="390" width="7" height="1" fill="#000" />
<rect x="508" y="390" width="7" height="1" fill="#000" />
<rect x="520" y="390" width="7" height="1" fill="#000" />
<rect x="532" y="390" width="7" height="1" fill="#000" />
<rect x="544" y="390" width="7" height="1" fill="#000" />
<rect x="496" y="399" width="7" height="1" fill="#000" />
<rect x="508" y="399" width="7" height="1" fill="#000" />
<rect x="520" y="399" width="7" height="1" fill="#000" />
<rect x="532" y="399" width="7" height="1" fill="#000" />
<rect x="544" y="399" width="7" height="1" fill="#000" />
<rect x="496" y="408" width="7" height="1" fill="#000" />
<rect x="508" y="408" width="7" height="1" fill="#000" />
<rect x="520" y="408" width="7" height="1" fill="#000" />
<rect x="532" y="408" width="7" height="1" fill="#000" />
<rect x="544" y="408" width="7" height="1" fill="#000" />
<rect x="493" y="422" width="61" height="10" fill="#000" />
<rect x="493" y="431" width="61" height="9" fill="#d9d9d9" />
<rect x="493" y="449" width="61" height="9" fill="#d9d9d9" />
<rect x="493" y="431" width="61" height="1" fill="#000" />
<rect x="493" y="440" width="61" height="1" fill="#000" />
<rect x="493" y="449" width="61" height="1" fill="#000" />
<rect x="493" y="458" width="61" height="1" fill="#000" />
<rect x="505" y="422" width="1" height="46" fill="#000" />
<rect x="517" y="422" width="1" height="46" fill="#000" />
<rect x="529" y="422" width="1" height="46" fill="#000" />
<rect x="541" y="422" width="1" height="46" fill="#000" />
<rect x="493.5" y="422.5" width="60" height="45" fill="none" stroke="#000" stroke-width="1"/>
<rect x="496" y="426" width="7" height="1" fill="#fff" />
<rect x="508" y="426" width="7" height="1" fill="#fff" />
<rect x="520" y="426" width="7" height="1" fill="#fff" />
<rect x="532" y="426" width="7" height="1" fill="#fff" />
<rect x="544" y="426" width="7" height="1" fill="#fff" />
<rect x="496" y="435" width="7" height="1" fill="#000" />
<rect x="508" y="435" width="7" height="1" fill="#000" />
<rect x="520" y="435" width="7" height="1" fill="#000" />
<rect x="532" y="435" width="7" height="1" fill="#000" />
<rect x="544" y="435" width="7" height="1" fill="#000" />
<rect x="496" y="444" width="7" height="1" fill="#000" />
<rect x="508" y="444" width="7" height="1" fill="#000" />
<rect x="520" y="444" width="7" height="1" fill="#000" />
<rect x="532" y="444" width="7" height="1" fill="#000" />
<rect x="544" y="444" width="7" height="1" fill="#000" />
<rect x="496" y="453" width="7" height="1" fill="#000" />
<rect x="508" y="453" width="7" height="1" fill="#000" />
<rect x="520" y="453" width="7" height="1" fill="#000" />
<rect x="532" y="453" width="7" height="1" fill="#000" />
<rect x="544" y="453" width="7" height="1" fill="#000" />
<rect x="496" y="462" width="7" height="1" fill="#000" />
<rect x="508" y="462" width="7" height="1" fill="#000" />
<rect x="520" y="462" width="7" height="1" fill="#000" />
<rect x="532" y="462" width="7" height="1" fill="#000" />
<rect x="544" y="462" width="7" height="1" fill="#000" />
<rect x="493" y="476" width="61" height="9" fill="#d9d9d9" />
<rect x="493" y="485" width="61" height="9" fill="#a6a6a6" />
<rect x="493" y="494" width="61" height="9" fill="#d9d9d9" />
<rect x="493" y="503" width="61" height="9" fill="#a6a6a6" />
<rect x="493" y="512" width="61" height="9" fill="#d9d9d9" />
<rect x="493" y="485" width="61" height="1" fill="#000" />
<rect x="493" y="494" width="61" height="1" fill="#000" />
<rect x="493" y="503" width="61" height="1" fill="#000" />
<rect x="493" y="512" width="61" height="1" fill="#000" />
<rect x="505" y="476" width="1" height="46" fill="#000" />
<rect x="517" y="476" width="1" height="46" fill="#000" />
<rect x="529" y="476" width="1" height="46" fill="#000" />
<rect x="541" y="476" width="1" height="46" fill="#000" />
<rect x="493.5" y="476.5" width="60" height="45" fill="none" stroke="#000" stroke-width="1"/>
<rect x="496" y="480" width="7" height="1" fill="#000" />
<rect x="508" y="480" width="7" height="1" fill="#000" />
<rect x="520" y="480" width="7" height="1" fill="#000" />
<rect x="532" y="480" width="7" height="1" fill="#000" />
<rect x="544" y="480" width="7" height="1" fill="#000" />
<rect x="496" y="489" width="7" height="1" fill="#000" />
<rect x="508" y="489" width="7" height="1" fill="#000" />
<rect x="520" y="489" width="7" height="1" fill="#000" />
<rect x="532" y="489" width="7" height="1" fill="#000" />
<rect x="544" y="489" width="7" height="1" fill="#000" />
<rect x="496" y="498" width="7" height="1" fill="#000" />
<rect x="508" y="498" width="7" height="1" fill="#000" />
<rect x="520" y="498" width="7" height="1" fill="#000" />
<rect x="532" y="498" width="7" height="1" fill="#000" />
<rect x="544" y="498" width="7" height="1" fill="#000" />
<rect x="496" y="507" width="7" height="1" fill="#000" />
<rect x="508" y="507" width="7" height="1" fill="#000" />
<rect x="520" y="507" width="7" height="1" fill="#000" />
<rect x="532" y="507" width="7" height="1" fill="#000" />
<rect x="544" y="507" width="7" height="1" fill="#000" />
<rect x="496" y="516" width="7" height="1" fill="#000" />
<rect x="508" y="516" width="7" height="1" fill="#000" />
<rect x="520" y="516" width="7" height="1" fill="#000" />
<rect x="532" y="516" width="7" height="1" fill="#000" />
<rect x="544" y="516" width="7" height="1" fill="#000" />
<rect x="493" y="569" width="61" height="9" fill="#000" />
<rect x="493" y="579" width="61" height="9" fill="#404040" />
<rect x="493" y="588" width="61" height="9" fill="#737373" />
<rect x="493" y="597" width="61" height="9" fill="#404040" />
<rect x="493" y="606" width="61" height="9" fill="#737373" />
<rect x="496" y="573" width="7" height="1" fill="#ffffff" />
<rect x="508" y="573" width="7" height="1" fill="#ffffff" />
<rect x="520" y="573" width="7" height="1" fill="#ffffff" />
<rect x="532" y="573" width="7" height="1" fill="#ffffff" />
<rect x="544" y="573" width="7" height="1" fill="#ffffff" />
<rect x="496" y="582" width="7" height="1" fill="#ffffff" />
<rect x="508" y="582" width="7" height="1" fill="#ffffff" />
<rect x="520" y="582" width="7" height="1" fill="#ffffff" />
<rect x="532" y="582" width="7" height="1" fill="#ffffff" />
<rect x="544" y="582" width="7" height="1" fill="#ffffff" />
<rect x="496" y="591" width="7" height="1" fill="#ffffff" />
<rect x="508" y="591" width="7" height="1" fill="#ffffff" />
<rect x="520" y="591" width="7" height="1" fill="#ffffff" />
<rect x="532" y="591" width="7" height="1" fill="#ffffff" />
<rect x="544" y="591" width="7" height="1" fill="#ffffff" />
<rect x="496" y="600" width="7" height="1" fill="#ffffff" />
<rect x="508" y="600" width="7" height="1" fill="#ffffff" />
<rect x="520" y="600" width="7" height="1" fill="#ffffff" />
<rect x="532" y="600" width="7" height="1" fill="#ffffff" />
<rect x="544" y="600" width="7" height="1" fill="#ffffff" />
<rect x="496" y="609" width="7" height="1" fill="#ffffff" />
<rect x="508" y="609" width="7" height="1" fill="#ffffff" />
<rect x="520" y="609" width="7" height="1" fill="#ffffff" />
<rect x="532" y="609" width="7" height="1" fill="#ffffff" />
<rect x="544" y="609" width="7" height="1" fill="#ffffff" />
<rect x="562" y="123" width="61" height="9" fill="#dce6f1" />
<rect x="562" y="141" width="61" height="9" fill="#dce6f1" />
<rect x="562" y="113" width="61" height="1" fill="#4f81bd" />
<rect x="562" y="122" width="61" height="1" fill="#4f81bd" />
<rect x="562" y="158" width="61" height="1" fill="#4f81bd" />
<rect x="565" y="117" width="7" height="1" fill="#365f91" />
<rect x="577" y="117" width="7" height="1" fill="#365f91" />
<rect x="589" y="117" width="7" height="1" fill="#365f91" />
<rect x="601" y="117" width="7" height="1" fill="#365f91" />
<rect x="613" y="117" width="7" height="1" fill="#365f91" />
<rect x="565" y="126" width="7" height="1" fill="#365f91" />
<rect x="577" y="126" width="7" height="1" fill="#365f91" />
<rect x="589" y="126" width="7" height="1" fill="#365f91" />
<rect x="601" y="126" width="7" height="1" fill="#365f91" />
<rect x="613" y="126" width="7" height="1" fill="#365f91" />
<rect x="565" y="135" width="7" height="1" fill="#365f91" />
<rect x="577" y="135" width="7" height="1" fill="#365f91" />
<rect x="589" y="135" width="7" height="1" fill="#365f91" />
<rect x="601" y="135" width="7" height="1" fill="#365f91" />
<rect x="613" y="135" width="7" height="1" fill="#365f91" />
<rect x="565" y="144" width="7" height="1" fill="#365f91" />
<rect x="577" y="144" width="7" height="1" fill="#365f91" />
<rect x="589" y="144" width="7" height="1" fill="#365f91" />
<rect x="601" y="144" width="7" height="1" fill="#365f91" />
<rect x="613" y="144" width="7" height="1" fill="#365f91" />
<rect x="565" y="153" width="7" height="1" fill="#365f91" />
<rect x="577" y="153" width="7" height="1" fill="#365f91" />
<rect x="589" y="153" width="7" height="1" fill="#365f91" />
<rect x="601" y="153" width="7" height="1" fill="#365f91" />
<rect x="613" y="153" width="7" height="1" fill="#365f91" />
<rect x="562" y="167" width="61" height="10" fill="#4f81bd" />
<rect x="562" y="185" width="61" height="1" fill="#4f81bd" />
<rect x="562" y="194" width="61" height="1" fill="#4f81bd" />
<rect x="562" y="203" width="61" height="1" fill="#4f81bd" />
<rect x="562.5" y="167.5" width="60" height="45" fill="none" stroke="#4f81bd" stroke-width="1"/>
<rect x="565" y="171" width="7" height="1" fill="#ffffff" />
<rect x="577" y="171" width="7" height="1" fill="#ffffff" />
<rect x="589" y="171" width="7" height="1" fill="#ffffff" />
<rect x="601" y="171" width="7" height="1" fill="#ffffff" />
<rect x="613" y="171" width="7" height="1" fill="#ffffff" />
<rect x="565" y="180" width="7" height="1" fill="#000" />
<rect x="577" y="180" width="7" height="1" fill="#000" />
<rect x="589" y="180" width="7" height="1" fill="#000" />
<rect x="601" y="180" width="7" height="1" fill="#000" />
<rect x="613" y="180" width="7" height="1" fill="#000" />
<rect x="565" y="189" width="7" height="1" fill="#000" />
<rect x="577" y="189" width="7" height="1" fill="#000" />
<rect x="589" y="189" width="7" height="1" fill="#000" />
<rect x="601" y="189" width="7" height="1" fill="#000" />
<rect x="613" y="189" width="7" height="1" fill="#000" />
<rect x="565" y="198" width="7" height="1" fill="#000" />
<rect x="577" y="198" width="7" height="1" fill="#000" />
<rect x="589" y="198" width="7" height="1" fill="#000" />
<rect x="601" y="198" width="7" height="1" fill="#000" />
<rect x="613" y="198" width="7" height="1" fill="#000" />
<rect x="565" y="207" width="7" height="1" fill="#000" />
<rect x="577" y="207" width="7" height="1" fill="#000" />
<rect x="589" y="207" width="7" height="1" fill="#000" />
<rect x="601" y="207" width="7" height="1" fill="#000" />
<rect x="613" y="207" width="7" height="1" fill="#000" />
<rect x="562" y="230" width="61" height="9" fill="#dce6f1" />
<rect x="562" y="248" width="61" height="9" fill="#dce6f1" />
<rect x="562" y="230" width="61" height="1" fill="#4f81bd" />
<rect x="562" y="239" width="61" height="1" fill="#4f81bd" />
<rect x="562" y="248" width="61" height="1" fill="#4f81bd" />
<rect x="562" y="257" width="61" height="1" fill="#4f81bd" />
<rect x="574" y="221" width="1" height="46" fill="#4f81bd" />
<rect x="586" y="221" width="1" height="46" fill="#4f81bd" />
<rect x="598" y="221" width="1" height="46" fill="#4f81bd" />
<rect x="610" y="221" width="1" height="46" fill="#4f81bd" />
<rect x="562.5" y="221.5" width="60" height="45" fill="none" stroke="#4f81bd" stroke-width="1"/>
<rect x="565" y="225" width="7" height="1" fill="#000" />
<rect x="577" y="225" width="7" height="1" fill="#000" />
<rect x="589" y="225" width="7" height="1" fill="#000" />
<rect x="601" y="225" width="7" height="1" fill="#000" />
<rect x="613" y="225" width="7" height="1" fill="#000" />
<rect x="565" y="234" width="7" height="1" fill="#000" />
<rect x="577" y="234" width="7" height="1" fill="#000" />
<rect x="589" y="234" width="7" height="1" fill="#000" />
<rect x="601" y="234" width="7" height="1" fill="#000" />
<rect x="613" y="234" width="7" height="1" fill="#000" />
<rect x="565" y="243" width="7" height="1" fill="#000" />
<rect x="577" y="243" width="7" height="1" fill="#000" />
<rect x="589" y="243" width="7" height="1" fill="#000" />
<rect x="601" y="243" width="7" height="1" fill="#000" />
<rect x="613" y="243" width="7" height="1" fill="#000" />
<rect x="565" y="252" width="7" height="1" fill="#000" />
<rect x="577" y="252" width="7" height="1" fill="#000" />
<rect x="589" y="252" width="7" height="1" fill="#000" />
<rect x="601" y="252" width="7" height="1" fill="#000" />
<rect x="613" y="252" width="7" height="1" fill="#000" />
<rect x="565" y="261" width="7" height="1" fill="#000" />
<rect x="577" y="261" width="7" height="1" fill="#000" />
<rect x="589" y="261" width="7" height="1" fill="#000" />
<rect x="601" y="261" width="7" height="1" fill="#000" />
<rect x="613" y="261" width="7" height="1" fill="#000" />
<rect x="562" y="314" width="61" height="10" fill="#4f81bd" />
<rect x="562" y="324" width="61" height="8" fill="#dce6f1" />
<rect x="562" y="342" width="61" height="8" fill="#dce6f1" />
<rect x="562" y="332" width="61" height="1" fill="#95b3d7" />
<rect x="562" y="341" width="61" height="1" fill="#95b3d7" />
<rect x="562" y="350" width="61" height="1" fill="#95b3d7" />
<rect x="562.5" y="314.5" width="60" height="45" fill="none" stroke="#95b3d7" stroke-width="1"/>
<rect x="565" y="318" width="7" height="1" fill="#ffffff" />
<rect x="577" y="318" width="7" height="1" fill="#ffffff" />
<rect x="589" y="318" width="7" height="1" fill="#ffffff" />
<rect x="601" y="318" width="7" height="1" fill="#ffffff" />
<rect x="613" y="318" width="7" height="1" fill="#ffffff" />
<rect x="565" y="327" width="7" height="1" fill="#000" />
<rect x="577" y="327" width="7" height="1" fill="#000" />
<rect x="589" y="327" width="7" height="1" fill="#000" />
<rect x="601" y="327" width="7" height="1" fill="#000" />
<rect x="613" y="327" width="7" height="1" fill="#000" />
<rect x="565" y="336" width="7" height="1" fill="#000" />
<rect x="577" y="336" width="7" height="1" fill="#000" />
<rect x="589" y="336" width="7" height="1" fill="#000" />
<rect x="601" y="336" width="7" height="1" fill="#000" />
<rect x="613" y="336" width="7" height="1" fill="#000" />
<rect x="565" y="345" width="7" height="1" fill="#000" />
<rect x="577" y="345" width="7" height="1" fill="#000" />
<rect x="589" y="345" width="7" height="1" fill="#000" />
<rect x="601" y="345" width="7" height="1" fill="#000" />
<rect x="613" y="345" width="7" height="1" fill="#000" />
<rect x="565" y="354" width="7" height="1" fill="#000" />
<rect x="577" y="354" width="7" height="1" fill="#000" />
<rect x="589" y="354" width="7" height="1" fill="#000" />
<rect x="601" y="354" width="7" height="1" fill="#000" />
<rect x="613" y="354" width="7" height="1" fill="#000" />
<rect x="562" y="368" width="61" height="10" fill="#4f81bd" />
<rect x="562" y="377" width="61" height="10" fill="#b8cce4" />
<rect x="562" y="386" width="61" height="10" fill="#dce6f1" />
<rect x="562" y="395" width="61" height="10" fill="#b8cce4" />
<rect x="562" y="404" width="61" height="10" fill="#dce6f1" />
<rect x="562" y="377" width="61" height="1" fill="#ffffff" />
<rect x="562" y="386" width="61" height="1" fill="#ffffff" />
<rect x="562" y="395" width="61" height="1" fill="#ffffff" />
<rect x="562" y="404" width="61" height="1" fill="#ffffff" />
<rect x="574" y="368" width="1" height="46" fill="#ffffff" />
<rect x="586" y="368" width="1" height="46" fill="#ffffff" />
<rect x="598" y="368" width="1" height="46" fill="#ffffff" />
<rect x="610" y="368" width="1" height="46" fill="#ffffff" />
<rect x="565" y="372" width="7" height="1" fill="#ffffff" />
<rect x="577" y="372" width="7" height="1" fill="#ffffff" />
<rect x="589" y="372" width="7" height="1" fill="#ffffff" />
<rect x="601" y="372" width="7" height="1" fill="#ffffff" />
<rect x="613" y="372" width="7" height="1" fill="#ffffff" />
<rect x="565" y="381" width="7" height="1" fill="#000" />
<rect x="577" y="381" width="7" height="1" fill="#000" />
<rect x="589" y="381" width="7" height="1" fill="#000" />
<rect x="601" y="381" width="7" height="1" fill="#000" />
<rect x="613" y="381" width="7" height="1" fill="#000" />
<rect x="565" y="390" width="7" height="1" fill="#000" />
<rect x="577" y="390" width="7" height="1" fill="#000" />
<rect x="589" y="390" width="7" height="1" fill="#000" />
<rect x="601" y="390" width="7" height="1" fill="#000" />
<rect x="613" y="390" width="7" height="1" fill="#000" />
<rect x="565" y="399" width="7" height="1" fill="#000" />
<rect x="577" y="399" width="7" height="1" fill="#000" />
<rect x="589" y="399" width="7" height="1" fill="#000" />
<rect x="601" y="399" width="7" height="1" fill="#000" />
<rect x="613" y="399" width="7" height="1" fill="#000" />
<rect x="565" y="408" width="7" height="1" fill="#000" />
<rect x="577" y="408" width="7" height="1" fill="#000" />
<rect x="589" y="408" width="7" height="1" fill="#000" />
<rect x="601" y="408" width="7" height="1" fill="#000" />
<rect x="613" y="408" width="7" height="1" fill="#000" />
<rect x="562" y="422" width="61" height="1" fill="#000" />
<rect x="562" y="423" width="61" height="8" fill="#4f81bd" />
<rect x="562" y="431" width="61" height="1" fill="#000" />
<rect x="562" y="432" width="61" height="9" fill="#d9d9d9" />
<rect x="562" y="450" width="61" height="9" fill="#d9d9d9" />
<rect x="562" y="467" width="61" height="1" fill="#000" />
<rect x="565" y="426" width="7" height="1" fill="#fff" />
<rect x="577" y="426" width="7" height="1" fill="#fff" />
<rect x="589" y="426" width="7" height="1" fill="#fff" />
<rect x="601" y="426" width="7" height="1" fill="#fff" />
<rect x="613" y="426" width="7" height="1" fill="#fff" />
<rect x="565" y="435" width="7" height="1" fill="#000" />
<rect x="577" y="435" width="7" height="1" fill="#000" />
<rect x="589" y="435" width="7" height="1" fill="#000" />
<rect x="601" y="435" width="7" height="1" fill="#000" />
<rect x="613" y="435" width="7" height="1" fill="#000" />
<rect x="565" y="444" width="7" height="1" fill="#000" />
<rect x="577" y="444" width="7" height="1" fill="#000" />
<rect x="589" y="444" width="7" height="1" fill="#000" />
<rect x="601" y="444" width="7" height="1" fill="#000" />
<rect x="613" y="444" width="7" height="1" fill="#000" />
<rect x="565" y="453" width="7" height="1" fill="#000" />
<rect x="577" y="453" width="7" height="1" fill="#000" />
<rect x="589" y="453" width="7" height="1" fill="#000" />
<rect x="601" y="453" width="7" height="1" fill="#000" />
<rect x="613" y="453" width="7" height="1" fill="#000" />
<rect x="565" y="462" width="7" height="1" fill="#000" />
<rect x="577" y="462" width="7" height="1" fill="#000" />
<rect x="589" y="462" width="7" height="1" fill="#000" />
<rect x="601" y="462" width="7" height="1" fill="#000" />
<rect x="613" y="462" width="7" height="1" fill="#000" />
<rect x="562" y="476" width="61" height="9" fill="#dce6f1" />
<rect x="562" y="485" width="61" height="9" fill="#b8cce4" />
<rect x="562" y="494" width="61" height="9" fill="#dce6f1" />
<rect x="562" y="503" width="61" height="9" fill="#b8cce4" />
<rect x="562" y="512" width="61" height="9" fill="#dce6f1" />
<rect x="562" y="485" width="61" height="1" fill="#95b3d7" />
<rect x="562" y="494" width="61" height="1" fill="#95b3d7" />
<rect x="562" y="503" width="61" height="1" fill="#95b3d7" />
<rect x="562" y="512" width="61" height="1" fill="#95b3d7" />
<rect x="574" y="476" width="1" height="46" fill="#95b3d7" />
<rect x="586" y="476" width="1" height="46" fill="#95b3d7" />
<rect x="598" y="476" width="1" height="46" fill="#95b3d7" />
<rect x="610" y="476" width="1" height="46" fill="#95b3d7" />
<rect x="562.5" y="476.5" width="60" height="45" fill="none" stroke="#95b3d7" stroke-width="1"/>
<rect x="565" y="480" width="7" height="1" fill="#000" />
<rect x="577" y="480" width="7" height="1" fill="#000" />
<rect x="589" y="480" width="7" height="1" fill="#000" />
<rect x="601" y="480" width="7" height="1" fill="#000" />
<rect x="613" y="480" width="7" height="1" fill="#000" />
<rect x="565" y="489" width="7" height="1" fill="#000" />
<rect x="577" y="489" width="7" height="1" fill="#000" />
<rect x="589" y="489" width="7" height="1" fill="#000" />
<rect x="601" y="489" width="7" height="1" fill="#000" />
<rect x="613" y="489" width="7" height="1" fill="#000" />
<rect x="565" y="498" width="7" height="1" fill="#000" />
<rect x="577" y="498" width="7" height="1" fill="#000" />
<rect x="589" y="498" width="7" height="1" fill="#000" />
<rect x="601" y="498" width="7" height="1" fill="#000" />
<rect x="613" y="498" width="7" height="1" fill="#000" />
<rect x="565" y="507" width="7" height="1" fill="#000" />
<rect x="577" y="507" width="7" height="1" fill="#000" />
<rect x="589" y="507" width="7" height="1" fill="#000" />
<rect x="601" y="507" width="7" height="1" fill="#000" />
<rect x="613" y="507" width="7" height="1" fill="#000" />
<rect x="565" y="516" width="7" height="1" fill="#000" />
<rect x="577" y="516" width="7" height="1" fill="#000" />
<rect x="589" y="516" width="7" height="1" fill="#000" />
<rect x="601" y="516" width="7" height="1" fill="#000" />
<rect x="613" y="516" width="7" height="1" fill="#000" />
<rect x="562" y="569" width="61" height="9" fill="#000" />
<rect x="562" y="579" width="61" height="9" fill="#365f91" />
<rect x="562" y="588" width="61" height="9" fill="#4f81bd" />
<rect x="562" y="597" width="61" height="9" fill="#365f91" />
<rect x="562" y="606" width="61" height="9" fill="#4f81bd" />
<rect x="565" y="573" width="7" height="1" fill="#ffffff" />
<rect x="577" y="573" width="7" height="1" fill="#ffffff" />
<rect x="589" y="573" width="7" height="1" fill="#ffffff" />
<rect x="601" y="573" width="7" height="1" fill="#ffffff" />
<rect x="613" y="573" width="7" height="1" fill="#ffffff" />
<rect x="565" y="582" width="7" height="1" fill="#ffffff" />
<rect x="577" y="582" width="7" height="1" fill="#ffffff" />
<rect x="589" y="582" width="7" height="1" fill="#ffffff" />
<rect x="601" y="582" width="7" height="1" fill="#ffffff" />
<rect x="613" y="582" width="7" height="1" fill="#ffffff" />
<rect x="565" y="591" width="7" height="1" fill="#ffffff" />
<rect x="577" y="591" width="7" height="1" fill="#ffffff" />
<rect x="589" y="591" width="7" height="1" fill="#ffffff" />
<rect x="601" y="591" width="7" height="1" fill="#ffffff" />
<rect x="613" y="591" width="7" height="1" fill="#ffffff" />
<rect x="565" y="600" width="7" height="1" fill="#ffffff" />
<rect x="577" y="600" width="7" height="1" fill="#ffffff" />
<rect x="589" y="600" width="7" height="1" fill="#ffffff" />
<rect x="601" y="600" width="7" height="1" fill="#ffffff" />
<rect x="613" y="600" width="7" height="1" fill="#ffffff" />
<rect x="565" y="609" width="7" height="1" fill="#ffffff" />
<rect x="577" y="609" width="7" height="1" fill="#ffffff" />
<rect x="589" y="609" width="7" height="1" fill="#ffffff" />
<rect x="601" y="609" width="7" height="1" fill="#ffffff" />
<rect x="613" y="609" width="7" height="1" fill="#ffffff" />
<rect x="631" y="123" width="61" height="9" fill="#f2dcdb" />
<rect x="631" y="141" width="61" height="9" fill="#f2dcdb" />
<rect x="631" y="113" width="61" height="1" fill="#c0504d" />
<rect x="631" y="122" width="61" height="1" fill="#c0504d" />
<rect x="631" y="158" width="61" height="1" fill="#c0504d" />
<rect x="634" y="117" width="7" height="1" fill="#963634" />
<rect x="646" y="117" width="7" height="1" fill="#963634" />
<rect x="658" y="117" width="7" height="1" fill="#963634" />
<rect x="670" y="117" width="7" height="1" fill="#963634" />
<rect x="682" y="117" width="7" height="1" fill="#963634" />
<rect x="634" y="126" width="7" height="1" fill="#963634" />
<rect x="646" y="126" width="7" height="1" fill="#963634" />
<rect x="658" y="126" width="7" height="1" fill="#963634" />
<rect x="670" y="126" width="7" height="1" fill="#963634" />
<rect x="682" y="126" width="7" height="1" fill="#963634" />
<rect x="634" y="135" width="7" height="1" fill="#963634" />
<rect x="646" y="135" width="7" height="1" fill="#963634" />
<rect x="658" y="135" width="7" height="1" fill="#963634" />
<rect x="670" y="135" width="7" height="1" fill="#963634" />
<rect x="682" y="135" width="7" height="1" fill="#963634" />
<rect x="634" y="144" width="7" height="1" fill="#963634" />
<rect x="646" y="144" width="7" height="1" fill="#963634" />
<rect x="658" y="144" width="7" height="1" fill="#963634" />
<rect x="670" y="144" width="7" height="1" fill="#963634" />
<rect x="682" y="144" width="7" height="1" fill="#963634" />
<rect x="634" y="153" width="7" height="1" fill="#963634" />
<rect x="646" y="153" width="7" height="1" fill="#963634" />
<rect x="658" y="153" width="7" height="1" fill="#963634" />
<rect x="670" y="153" width="7" height="1" fill="#963634" />
<rect x="682" y="153" width="7" height="1" fill="#963634" />
<rect x="631" y="167" width="61" height="10" fill="#c0504d" />
<rect x="631" y="185" width="61" height="1" fill="#c0504d" />
<rect x="631" y="194" width="61" height="1" fill="#c0504d" />
<rect x="631" y="203" width="61" height="1" fill="#c0504d" />
<rect x="631.5" y="167.5" width="60" height="45" fill="none" stroke="#c0504d" stroke-width="1"/>
<rect x="634" y="171" width="7" height="1" fill="#ffffff" />
<rect x="646" y="171" width="7" height="1" fill="#ffffff" />
<rect x="658" y="171" width="7" height="1" fill="#ffffff" />
<rect x="670" y="171" width="7" height="1" fill="#ffffff" />
<rect x="682" y="171" width="7" height="1" fill="#ffffff" />
<rect x="634" y="180" width="7" height="1" fill="#000" />
<rect x="646" y="180" width="7" height="1" fill="#000" />
<rect x="658" y="180" width="7" height="1" fill="#000" />
<rect x="670" y="180" width="7" height="1" fill="#000" />
<rect x="682" y="180" width="7" height="1" fill="#000" />
<rect x="634" y="189" width="7" height="1" fill="#000" />
<rect x="646" y="189" width="7" height="1" fill="#000" />
<rect x="658" y="189" width="7" height="1" fill="#000" />
<rect x="670" y="189" width="7" height="1" fill="#000" />
<rect x="682" y="189" width="7" height="1" fill="#000" />
<rect x="634" y="198" width="7" height="1" fill="#000" />
<rect x="646" y="198" width="7" height="1" fill="#000" />
<rect x="658" y="198" width="7" height="1" fill="#000" />
<rect x="670" y="198" width="7" height="1" fill="#000" />
<rect x="682" y="198" width="7" height="1" fill="#000" />
<rect x="634" y="207" width="7" height="1" fill="#000" />
<rect x="646" y="207" width="7" height="1" fill="#000" />
<rect x="658" y="207" width="7" height="1" fill="#000" />
<rect x="670" y="207" width="7" height="1" fill="#000" />
<rect x="682" y="207" width="7" height="1" fill="#000" />
<rect x="631" y="230" width="61" height="9" fill="#f2dcdb" />
<rect x="631" y="248" width="61" height="9" fill="#f2dcdb" />
<rect x="631" y="230" width="61" height="1" fill="#c0504d" />
<rect x="631" y="239" width="61" height="1" fill="#c0504d" />
<rect x="631" y="248" width="61" height="1" fill="#c0504d" />
<rect x="631" y="257" width="61" height="1" fill="#c0504d" />
<rect x="643" y="221" width="1" height="46" fill="#c0504d" />
<rect x="655" y="221" width="1" height="46" fill="#c0504d" />
<rect x="667" y="221" width="1" height="46" fill="#c0504d" />
<rect x="679" y="221" width="1" height="46" fill="#c0504d" />
<rect x="631.5" y="221.5" width="60" height="45" fill="none" stroke="#c0504d" stroke-width="1"/>
<rect x="634" y="225" width="7" height="1" fill="#000" />
<rect x="646" y="225" width="7" height="1" fill="#000" />
<rect x="658" y="225" width="7" height="1" fill="#000" />
<rect x="670" y="225" width="7" height="1" fill="#000" />
<rect x="682" y="225" width="7" height="1" fill="#000" />
<rect x="634" y="234" width="7" height="1" fill="#000" />
<rect x="646" y="234" width="7" height="1" fill="#000" />
<rect x="658" y="234" width="7" height="1" fill="#000" />
<rect x="670" y="234" width="7" height="1" fill="#000" />
<rect x="682" y="234" width="7" height="1" fill="#000" />
<rect x="634" y="243" width="7" height="1" fill="#000" />
<rect x="646" y="243" width="7" height="1" fill="#000" />
<rect x="658" y="243" width="7" height="1" fill="#000" />
<rect x="670" y="243" width="7" height="1" fill="#000" />
<rect x="682" y="243" width="7" height="1" fill="#000" />
<rect x="634" y="252" width="7" height="1" fill="#000" />
<rect x="646" y="252" width="7" height="1" fill="#000" />
<rect x="658" y="252" width="7" height="1" fill="#000" />
<rect x="670" y="252" width="7" height="1" fill="#000" />
<rect x="682" y="252" width="7" height="1" fill="#000" />
<rect x="634" y="261" width="7" height="1" fill="#000" />
<rect x="646" y="261" width="7" height="1" fill="#000" />
<rect x="658" y="261" width="7" height="1" fill="#000" />
<rect x="670" y="261" width="7" height="1" fill="#000" />
<rect x="682" y="261" width="7" height="1" fill="#000" />
<rect x="631" y="314" width="61" height="10" fill="#c0504d" />
<rect x="631" y="324" width="61" height="8" fill="#f2dcdb" />
<rect x="631" y="342" width="61" height="8" fill="#f2dcdb" />
<rect x="631" y="332" width="61" height="1" fill="#da9694" />
<rect x="631" y="341" width="61" height="1" fill="#da9694" />
<rect x="631" y="350" width="61" height="1" fill="#da9694" />
<rect x="631.5" y="314.5" width="60" height="45" fill="none" stroke="#da9694" stroke-width="1"/>
<rect x="634" y="318" width="7" height="1" fill="#ffffff" />
<rect x="646" y="318" width="7" height="1" fill="#ffffff" />
<rect x="658" y="318" width="7" height="1" fill="#ffffff" />
<rect x="670" y="318" width="7" height="1" fill="#ffffff" />
<rect x="682" y="318" width="7" height="1" fill="#ffffff" />
<rect x="634" y="327" width="7" height="1" fill="#000" />
<rect x="646" y="327" width="7" height="1" fill="#000" />
<rect x="658" y="327" width="7" height="1" fill="#000" />
<rect x="670" y="327" width="7" height="1" fill="#000" />
<rect x="682" y="327" width="7" height="1" fill="#000" />
<rect x="634" y="336" width="7" height="1" fill="#000" />
<rect x="646" y="336" width="7" height="1" fill="#000" />
<rect x="658" y="336" width="7" height="1" fill="#000" />
<rect x="670" y="336" width="7" height="1" fill="#000" />
<rect x="682" y="336" width="7" height="1" fill="#000" />
<rect x="634" y="345" width="7" height="1" fill="#000" />
<rect x="646" y="345" width="7" height="1" fill="#000" />
<rect x="658" y="345" width="7" height="1" fill="#000" />
<rect x="670" y="345" width="7" height="1" fill="#000" />
<rect x="682" y="345" width="7" height="1" fill="#000" />
<rect x="634" y="354" width="7" height="1" fill="#000" />
<rect x="646" y="354" width="7" height="1" fill="#000" />
<rect x="658" y="354" width="7" height="1" fill="#000" />
<rect x="670" y="354" width="7" height="1" fill="#000" />
<rect x="682" y="354" width="7" height="1" fill="#000" />
<rect x="631" y="368" width="61" height="10" fill="#c0504d" />
<rect x="631" y="377" width="61" height="10" fill="#e6b8b7" />
<rect x="631" y="386" width="61" height="10" fill="#f2dcdb" />
<rect x="631" y="395" width="61" height="10" fill="#e6b8b7" />
<rect x="631" y="404" width="61" height="10" fill="#f2dcdb" />
<rect x="631" y="377" width="61" height="1" fill="#ffffff" />
<rect x="631" y="386" width="61" height="1" fill="#ffffff" />
<rect x="631" y="395" width="61" height="1" fill="#ffffff" />
<rect x="631" y="404" width="61" height="1" fill="#ffffff" />
<rect x="643" y="368" width="1" height="46" fill="#ffffff" />
<rect x="655" y="368" width="1" height="46" fill="#ffffff" />
<rect x="667" y="368" width="1" height="46" fill="#ffffff" />
<rect x="679" y="368" width="1" height="46" fill="#ffffff" />
<rect x="634" y="372" width="7" height="1" fill="#ffffff" />
<rect x="646" y="372" width="7" height="1" fill="#ffffff" />
<rect x="658" y="372" width="7" height="1" fill="#ffffff" />
<rect x="670" y="372" width="7" height="1" fill="#ffffff" />
<rect x="682" y="372" width="7" height="1" fill="#ffffff" />
<rect x="634" y="381" width="7" height="1" fill="#000" />
<rect x="646" y="381" width="7" height="1" fill="#000" />
<rect x="658" y="381" width="7" height="1" fill="#000" />
<rect x="670" y="381" width="7" height="1" fill="#000" />
<rect x="682" y="381" width="7" height="1" fill="#000" />
<rect x="634" y="390" width="7" height="1" fill="#000" />
<rect x="646" y="390" width="7" height="1" fill="#000" />
<rect x="658" y="390" width="7" height="1" fill="#000" />
<rect x="670" y="390" width="7" height="1" fill="#000" />
<rect x="682" y="390" width="7" height="1" fill="#000" />
<rect x="634" y="399" width="7" height="1" fill="#000" />
<rect x="646" y="399" width="7" height="1" fill="#000" />
<rect x="658" y="399" width="7" height="1" fill="#000" />
<rect x="670" y="399" width="7" height="1" fill="#000" />
<rect x="682" y="399" width="7" height="1" fill="#000" />
<rect x="634" y="408" width="7" height="1" fill="#000" />
<rect x="646" y="408" width="7" height="1" fill="#000" />
<rect x="658" y="408" width="7" height="1" fill="#000" />
<rect x="670" y="408" width="7" height="1" fill="#000" />
<rect x="682" y="408" width="7" height="1" fill="#000" />
<rect x="631" y="422" width="61" height="1" fill="#000" />
<rect x="631" y="423" width="61" height="8" fill="#c0504d" />
<rect x="631" y="431" width="61" height="1" fill="#000" />
<rect x="631" y="432" width="61" height="9" fill="#d9d9d9" />
<rect x="631" y="450" width="61" height="9" fill="#d9d9d9" />
<rect x="631" y="467" width="61" height="1" fill="#000" />
<rect x="634" y="426" width="7" height="1" fill="#fff" />
<rect x="646" y="426" width="7" height="1" fill="#fff" />
<rect x="658" y="426" width="7" height="1" fill="#fff" />
<rect x="670" y="426" width="7" height="1" fill="#fff" />
<rect x="682" y="426" width="7" height="1" fill="#fff" />
<rect x="634" y="435" width="7" height="1" fill="#000" />
<rect x="646" y="435" width="7" height="1" fill="#000" />
<rect x="658" y="435" width="7" height="1" fill="#000" />
<rect x="670" y="435" width="7" height="1" fill="#000" />
<rect x="682" y="435" width="7" height="1" fill="#000" />
<rect x="634" y="444" width="7" height="1" fill="#000" />
<rect x="646" y="444" width="7" height="1" fill="#000" />
<rect x="658" y="444" width="7" height="1" fill="#000" />
<rect x="670" y="444" width="7" height="1" fill="#000" />
<rect x="682" y="444" width="7" height="1" fill="#000" />
<rect x="634" y="453" width="7" height="1" fill="#000" />
<rect x="646" y="453" width="7" height="1" fill="#000" />
<rect x="658" y="453" width="7" height="1" fill="#000" />
<rect x="670" y="453" width="7" height="1" fill="#000" />
<rect x="682" y="453" width="7" height="1" fill="#000" />
<rect x="634" y="462" width="7" height="1" fill="#000" />
<rect x="646" y="462" width="7" height="1" fill="#000" />
<rect x="658" y="462" width="7" height="1" fill="#000" />
<rect x="670" y="462" width="7" height="1" fill="#000" />
<rect x="682" y="462" width="7" height="1" fill="#000" />
<rect x="631" y="476" width="61" height="9" fill="#f2dcdb" />
<rect x="631" y="485" width="61" height="9" fill="#e6b8b7" />
<rect x="631" y="494" width="61" height="9" fill="#f2dcdb" />
<rect x="631" y="503" width="61" height="9" fill="#e6b8b7" />
<rect x="631" y="512" width="61" height="9" fill="#f2dcdb" />
<rect x="631" y="485" width="61" height="1" fill="#da9694" />
<rect x="631" y="494" width="61" height="1" fill="#da9694" />
<rect x="631" y="503" width="61" height="1" fill="#da9694" />
<rect x="631" y="512" width="61" height="1" fill="#da9694" />
<rect x="643" y="476" width="1" height="46" fill="#da9694" />
<rect x="655" y="476" width="1" height="46" fill="#da9694" />
<rect x="667" y="476" width="1" height="46" fill="#da9694" />
<rect x="679" y="476" width="1" height="46" fill="#da9694" />
<rect x="631.5" y="476.5" width="60" height="45" fill="none" stroke="#da9694" stroke-width="1"/>
<rect x="634" y="480" width="7" height="1" fill="#000" />
<rect x="646" y="480" width="7" height="1" fill="#000" />
<rect x="658" y="480" width="7" height="1" fill="#000" />
<rect x="670" y="480" width="7" height="1" fill="#000" />
<rect x="682" y="480" width="7" height="1" fill="#000" />
<rect x="634" y="489" width="7" height="1" fill="#000" />
<rect x="646" y="489" width="7" height="1" fill="#000" />
<rect x="658" y="489" width="7" height="1" fill="#000" />
<rect x="670" y="489" width="7" height="1" fill="#000" />
<rect x="682" y="489" width="7" height="1" fill="#000" />
<rect x="634" y="498" width="7" height="1" fill="#000" />
<rect x="646" y="498" width="7" height="1" fill="#000" />
<rect x="658" y="498" width="7" height="1" fill="#000" />
<rect x="670" y="498" width="7" height="1" fill="#000" />
<rect x="682" y="498" width="7" height="1" fill="#000" />
<rect x="634" y="507" width="7" height="1" fill="#000" />
<rect x="646" y="507" width="7" height="1" fill="#000" />
<rect x="658" y="507" width="7" height="1" fill="#000" />
<rect x="670" y="507" width="7" height="1" fill="#000" />
<rect x="682" y="507" width="7" height="1" fill="#000" />
<rect x="634" y="516" width="7" height="1" fill="#000" />
<rect x="646" y="516" width="7" height="1" fill="#000" />
<rect x="658" y="516" width="7" height="1" fill="#000" />
<rect x="670" y="516" width="7" height="1" fill="#000" />
<rect x="682" y="516" width="7" height="1" fill="#000" />
<rect x="631" y="569" width="61" height="9" fill="#000" />
<rect x="631" y="579" width="61" height="9" fill="#963634" />
<rect x="631" y="588" width="61" height="9" fill="#c0504d" />
<rect x="631" y="597" width="61" height="9" fill="#963634" />
<rect x="631" y="606" width="61" height="9" fill="#c0504d" />
<rect x="634" y="573" width="7" height="1" fill="#ffffff" />
<rect x="646" y="573" width="7" height="1" fill="#ffffff" />
<rect x="658" y="573" width="7" height="1" fill="#ffffff" />
<rect x="670" y="573" width="7" height="1" fill="#ffffff" />
<rect x="682" y="573" width="7" height="1" fill="#ffffff" />
<rect x="634" y="582" width="7" height="1" fill="#ffffff" />
<rect x="646" y="582" width="7" height="1" fill="#ffffff" />
<rect x="658" y="582" width="7" height="1" fill="#ffffff" />
<rect x="670" y="582" width="7" height="1" fill="#ffffff" />
<rect x="682" y="582" width="7" height="1" fill="#ffffff" />
<rect x="634" y="591" width="7" height="1" fill="#ffffff" />
<rect x="646" y="591" width="7" height="1" fill="#ffffff" />
<rect x="658" y="591" width="7" height="1" fill="#ffffff" />
<rect x="670" y="591" width="7" height="1" fill="#ffffff" />
<rect x="682" y="591" width="7" height="1" fill="#ffffff" />
<rect x="634" y="600" width="7" height="1" fill="#ffffff" />
<rect x="646" y="600" width="7" height="1" fill="#ffffff" />
<rect x="658" y="600" width="7" height="1" fill="#ffffff" />
<rect x="670" y="600" width="7" height="1" fill="#ffffff" />
<rect x="682" y="600" width="7" height="1" fill="#ffffff" />
<rect x="634" y="609" width="7" height="1" fill="#ffffff" />
<rect x="646" y="609" width="7" height="1" fill="#ffffff" />
<rect x="658" y="609" width="7" height="1" fill="#ffffff" />
<rect x="670" y="609" width="7" height="1" fill="#ffffff" />
<rect x="682" y="609" width="7" height="1" fill="#ffffff" />
<rect x="700" y="123" width="61" height="9" fill="#ebf1de" />
<rect x="700" y="141" width="61" height="9" fill="#ebf1de" />
<rect x="700" y="113" width="61" height="1" fill="#9bbb59" />
<rect x="700" y="122" width="61" height="1" fill="#9bbb59" />
<rect x="700" y="158" width="61" height="1" fill="#9bbb59" />
<rect x="703" y="117" width="7" height="1" fill="#76933c" />
<rect x="715" y="117" width="7" height="1" fill="#76933c" />
<rect x="727" y="117" width="7" height="1" fill="#76933c" />
<rect x="739" y="117" width="7" height="1" fill="#76933c" />
<rect x="751" y="117" width="7" height="1" fill="#76933c" />
<rect x="703" y="126" width="7" height="1" fill="#76933c" />
<rect x="715" y="126" width="7" height="1" fill="#76933c" />
<rect x="727" y="126" width="7" height="1" fill="#76933c" />
<rect x="739" y="126" width="7" height="1" fill="#76933c" />
<rect x="751" y="126" width="7" height="1" fill="#76933c" />
<rect x="703" y="135" width="7" height="1" fill="#76933c" />
<rect x="715" y="135" width="7" height="1" fill="#76933c" />
<rect x="727" y="135" width="7" height="1" fill="#76933c" />
<rect x="739" y="135" width="7" height="1" fill="#76933c" />
<rect x="751" y="135" width="7" height="1" fill="#76933c" />
<rect x="703" y="144" width="7" height="1" fill="#76933c" />
<rect x="715" y="144" width="7" height="1" fill="#76933c" />
<rect x="727" y="144" width="7" height="1" fill="#76933c" />
<rect x="739" y="144" width="7" height="1" fill="#76933c" />
<rect x="751" y="144" width="7" height="1" fill="#76933c" />
<rect x="703" y="153" width="7" height="1" fill="#76933c" />
<rect x="715" y="153" width="7" height="1" fill="#76933c" />
<rect x="727" y="153" width="7" height="1" fill="#76933c" />
<rect x="739" y="153" width="7" height="1" fill="#76933c" />
<rect x="751" y="153" width="7" height="1" fill="#76933c" />
<rect x="700" y="167" width="61" height="10" fill="#9bbb59" />
<rect x="700" y="185" width="61" height="1" fill="#9bbb59" />
<rect x="700" y="194" width="61" height="1" fill="#9bbb59" />
<rect x="700" y="203" width="61" height="1" fill="#9bbb59" />
<rect x="700.5" y="167.5" width="60" height="45" fill="none" stroke="#9bbb59" stroke-width="1"/>
<rect x="703" y="171" width="7" height="1" fill="#ffffff" />
<rect x="715" y="171" width="7" height="1" fill="#ffffff" />
<rect x="727" y="171" width="7" height="1" fill="#ffffff" />
<rect x="739" y="171" width="7" height="1" fill="#ffffff" />
<rect x="751" y="171" width="7" height="1" fill="#ffffff" />
<rect x="703" y="180" width="7" height="1" fill="#000" />
<rect x="715" y="180" width="7" height="1" fill="#000" />
<rect x="727" y="180" width="7" height="1" fill="#000" />
<rect x="739" y="180" width="7" height="1" fill="#000" />
<rect x="751" y="180" width="7" height="1" fill="#000" />
<rect x="703" y="189" width="7" height="1" fill="#000" />
<rect x="715" y="189" width="7" height="1" fill="#000" />
<rect x="727" y="189" width="7" height="1" fill="#000" />
<rect x="739" y="189" width="7" height="1" fill="#000" />
<rect x="751" y="189" width="7" height="1" fill="#000" />
<rect x="703" y="198" width="7" height="1" fill="#000" />
<rect x="715" y="198" width="7" height="1" fill="#000" />
<rect x="727" y="198" width="7" height="1" fill="#000" />
<rect x="739" y="198" width="7" height="1" fill="#000" />
<rect x="751" y="198" width="7" height="1" fill="#000" />
<rect x="703" y="207" width="7" height="1" fill="#000" />
<rect x="715" y="207" width="7" height="1" fill="#000" />
<rect x="727" y="207" width="7" height="1" fill="#000" />
<rect x="739" y="207" width="7" height="1" fill="#000" />
<rect x="751" y="207" width="7" height="1" fill="#000" />
<rect x="700" y="230" width="61" height="9" fill="#ebf1de" />
<rect x="700" y="248" width="61" height="9" fill="#ebf1de" />
<rect x="700" y="230" width="61" height="1" fill="#9bbb59" />
<rect x="700" y="239" width="61" height="1" fill="#9bbb59" />
<rect x="700" y="248" width="61" height="1" fill="#9bbb59" />
<rect x="700" y="257" width="61" height="1" fill="#9bbb59" />
<rect x="712" y="221" width="1" height="46" fill="#9bbb59" />
<rect x="724" y="221" width="1" height="46" fill="#9bbb59" />
<rect x="736" y="221" width="1" height="46" fill="#9bbb59" />
<rect x="748" y="221" width="1" height="46" fill="#9bbb59" />
<rect x="700.5" y="221.5" width="60" height="45" fill="none" stroke="#9bbb59" stroke-width="1"/>
<rect x="703" y="225" width="7" height="1" fill="#000" />
<rect x="715" y="225" width="7" height="1" fill="#000" />
<rect x="727" y="225" width="7" height="1" fill="#000" />
<rect x="739" y="225" width="7" height="1" fill="#000" />
<rect x="751" y="225" width="7" height="1" fill="#000" />
<rect x="703" y="234" width="7" height="1" fill="#000" />
<rect x="715" y="234" width="7" height="1" fill="#000" />
<rect x="727" y="234" width="7" height="1" fill="#000" />
<rect x="739" y="234" width="7" height="1" fill="#000" />
<rect x="751" y="234" width="7" height="1" fill="#000" />
<rect x="703" y="243" width="7" height="1" fill="#000" />
<rect x="715" y="243" width="7" height="1" fill="#000" />
<rect x="727" y="243" width="7" height="1" fill="#000" />
<rect x="739" y="243" width="7" height="1" fill="#000" />
<rect x="751" y="243" width="7" height="1" fill="#000" />
<rect x="703" y="252" width="7" height="1" fill="#000" />
<rect x="715" y="252" width="7" height="1" fill="#000" />
<rect x="727" y="252" width="7" height="1" fill="#000" />
<rect x="739" y="252" width="7" height="1" fill="#000" />
<rect x="751" y="252" width="7" height="1" fill="#000" />
<rect x="703" y="261" width="7" height="1" fill="#000" />
<rect x="715" y="261" width="7" height="1" fill="#000" />
<rect x="727" y="261" width="7" height="1" fill="#000" />
<rect x="739" y="261" width="7" height="1" fill="#000" />
<rect x="751" y="261" width="7" height="1" fill="#000" />
<rect x="700" y="314" width="61" height="10" fill="#9bbb59" />
<rect x="700" y="324" width="61" height="8" fill="#ebf1de" />
<rect x="700" y="342" width="61" height="8" fill="#ebf1de" />
<rect x="700" y="332" width="61" height="1" fill="#c4d79b" />
<rect x="700" y="341" width="61" height="1" fill="#c4d79b" />
<rect x="700" y="350" width="61" height="1" fill="#c4d79b" />
<rect x="700.5" y="314.5" width="60" height="45" fill="none" stroke="#c4d79b" stroke-width="1"/>
<rect x="703" y="318" width="7" height="1" fill="#ffffff" />
<rect x="715" y="318" width="7" height="1" fill="#ffffff" />
<rect x="727" y="318" width="7" height="1" fill="#ffffff" />
<rect x="739" y="318" width="7" height="1" fill="#ffffff" />
<rect x="751" y="318" width="7" height="1" fill="#ffffff" />
<rect x="703" y="327" width="7" height="1" fill="#000" />
<rect x="715" y="327" width="7" height="1" fill="#000" />
<rect x="727" y="327" width="7" height="1" fill="#000" />
<rect x="739" y="327" width="7" height="1" fill="#000" />
<rect x="751" y="327" width="7" height="1" fill="#000" />
<rect x="703" y="336" width="7" height="1" fill="#000" />
<rect x="715" y="336" width="7" height="1" fill="#000" />
<rect x="727" y="336" width="7" height="1" fill="#000" />
<rect x="739" y="336" width="7" height="1" fill="#000" />
<rect x="751" y="336" width="7" height="1" fill="#000" />
<rect x="703" y="345" width="7" height="1" fill="#000" />
<rect x="715" y="345" width="7" height="1" fill="#000" />
<rect x="727" y="345" width="7" height="1" fill="#000" />
<rect x="739" y="345" width="7" height="1" fill="#000" />
<rect x="751" y="345" width="7" height="1" fill="#000" />
<rect x="703" y="354" width="7" height="1" fill="#000" />
<rect x="715" y="354" width="7" height="1" fill="#000" />
<rect x="727" y="354" width="7" height="1" fill="#000" />
<rect x="739" y="354" width="7" height="1" fill="#000" />
<rect x="751" y="354" width="7" height="1" fill="#000" />
<rect x="700" y="368" width="61" height="10" fill="#9bbb59" />
<rect x="700" y="377" width="61" height="10" fill="#d8e4bc" />
<rect x="700" y="386" width="61" height="10" fill="#ebf1de" />
<rect x="700" y="395" width="61" height="10" fill="#d8e4bc" />
<rect x="700" y="404" width="61" height="10" fill="#ebf1de" />
<rect x="700" y="377" width="61" height="1" fill="#ffffff" />
<rect x="700" y="386" width="61" height="1" fill="#ffffff" />
<rect x="700" y="395" width="61" height="1" fill="#ffffff" />
<rect x="700" y="404" width="61" height="1" fill="#ffffff" />
<rect x="712" y="368" width="1" height="46" fill="#ffffff" />
<rect x="724" y="368" width="1" height="46" fill="#ffffff" />
<rect x="736" y="368" width="1" height="46" fill="#ffffff" />
<rect x="748" y="368" width="1" height="46" fill="#ffffff" />
<rect x="703" y="372" width="7" height="1" fill="#ffffff" />
<rect x="715" y="372" width="7" height="1" fill="#ffffff" />
<rect x="727" y="372" width="7" height="1" fill="#ffffff" />
<rect x="739" y="372" width="7" height="1" fill="#ffffff" />
<rect x="751" y="372" width="7" height="1" fill="#ffffff" />
<rect x="703" y="381" width="7" height="1" fill="#000" />
<rect x="715" y="381" width="7" height="1" fill="#000" />
<rect x="727" y="381" width="7" height="1" fill="#000" />
<rect x="739" y="381" width="7" height="1" fill="#000" />
<rect x="751" y="381" width="7" height="1" fill="#000" />
<rect x="703" y="390" width="7" height="1" fill="#000" />
<rect x="715" y="390" width="7" height="1" fill="#000" />
<rect x="727" y="390" width="7" height="1" fill="#000" />
<rect x="739" y="390" width="7" height="1" fill="#000" />
<rect x="751" y="390" width="7" height="1" fill="#000" />
<rect x="703" y="399" width="7" height="1" fill="#000" />
<rect x="715" y="399" width="7" height="1" fill="#000" />
<rect x="727" y="399" width="7" height="1" fill="#000" />
<rect x="739" y="399" width="7" height="1" fill="#000" />
<rect x="751" y="399" width="7" height="1" fill="#000" />
<rect x="703" y="408" width="7" height="1" fill="#000" />
<rect x="715" y="408" width="7" height="1" fill="#000" />
<rect x="727" y="408" width="7" height="1" fill="#000" />
<rect x="739" y="408" width="7" height="1" fill="#000" />
<rect x="751" y="408" width="7" height="1" fill="#000" />
<rect x="700" y="422" width="61" height="1" fill="#000" />
<rect x="700" y="423" width="61" height="8" fill="#9bbb59" />
<rect x="700" y="431" width="61" height="1" fill="#000" />
<rect x="700" y="432" width="61" height="9" fill="#d9d9d9" />
<rect x="700" y="450" width="61" height="9" fill="#d9d9d9" />
<rect x="700" y="467" width="61" height="1" fill="#000" />
<rect x="703" y="426" width="7" height="1" fill="#fff" />
<rect x="715" y="426" width="7" height="1" fill="#fff" />
<rect x="727" y="426" width="7" height="1" fill="#fff" />
<rect x="739" y="426" width="7" height="1" fill="#fff" />
<rect x="751" y="426" width="7" height="1" fill="#fff" />
<rect x="703" y="435" width="7" height="1" fill="#000" />
<rect x="715" y="435" width="7" height="1" fill="#000" />
<rect x="727" y="435" width="7" height="1" fill="#000" />
<rect x="739" y="435" width="7" height="1" fill="#000" />
<rect x="751" y="435" width="7" height="1" fill="#000" />
<rect x="703" y="444" width="7" height="1" fill="#000" />
<rect x="715" y="444" width="7" height="1" fill="#000" />
<rect x="727" y="444" width="7" height="1" fill="#000" />
<rect x="739" y="444" width="7" height="1" fill="#000" />
<rect x="751" y="444" width="7" height="1" fill="#000" />
<rect x="703" y="453" width="7" height="1" fill="#000" />
<rect x="715" y="453" width="7" height="1" fill="#000" />
<rect x="727" y="453" width="7" height="1" fill="#000" />
<rect x="739" y="453" width="7" height="1" fill="#000" />
<rect x="751" y="453" width="7" height="1" fill="#000" />
<rect x="703" y="462" width="7" height="1" fill="#000" />
<rect x="715" y="462" width="7" height="1" fill="#000" />
<rect x="727" y="462" width="7" height="1" fill="#000" />
<rect x="739" y="462" width="7" height="1" fill="#000" />
<rect x="751" y="462" width="7" height="1" fill="#000" />
<rect x="700" y="476" width="61" height="9" fill="#ebf1de" />
<rect x="700" y="485" width="61" height="9" fill="#d8e4bc" />
<rect x="700" y="494" width="61" height="9" fill="#ebf1de" />
<rect x="700" y="503" width="61" height="9" fill="#d8e4bc" />
<rect x="700" y="512" width="61" height="9" fill="#ebf1de" />
<rect x="700" y="485" width="61" height="1" fill="#c4d79b" />
<rect x="700" y="494" width="61" height="1" fill="#c4d79b" />
<rect x="700" y="503" width="61" height="1" fill="#c4d79b" />
<rect x="700" y="512" width="61" height="1" fill="#c4d79b" />
<rect x="712" y="476" width="1" height="46" fill="#c4d79b" />
<rect x="724" y="476" width="1" height="46" fill="#c4d79b" />
<rect x="736" y="476" width="1" height="46" fill="#c4d79b" />
<rect x="748" y="476" width="1" height="46" fill="#c4d79b" />
<rect x="700.5" y="476.5" width="60" height="45" fill="none" stroke="#c4d79b" stroke-width="1"/>
<rect x="703" y="480" width="7" height="1" fill="#000" />
<rect x="715" y="480" width="7" height="1" fill="#000" />
<rect x="727" y="480" width="7" height="1" fill="#000" />
<rect x="739" y="480" width="7" height="1" fill="#000" />
<rect x="751" y="480" width="7" height="1" fill="#000" />
<rect x="703" y="489" width="7" height="1" fill="#000" />
<rect x="715" y="489" width="7" height="1" fill="#000" />
<rect x="727" y="489" width="7" height="1" fill="#000" />
<rect x="739" y="489" width="7" height="1" fill="#000" />
<rect x="751" y="489" width="7" height="1" fill="#000" />
<rect x="703" y="498" width="7" height="1" fill="#000" />
<rect x="715" y="498" width="7" height="1" fill="#000" />
<rect x="727" y="498" width="7" height="1" fill="#000" />
<rect x="739" y="498" width="7" height="1" fill="#000" />
<rect x="751" y="498" width="7" height="1" fill="#000" />
<rect x="703" y="507" width="7" height="1" fill="#000" />
<rect x="715" y="507" width="7" height="1" fill="#000" />
<rect x="727" y="507" width="7" height="1" fill="#000" />
<rect x="739" y="507" width="7" height="1" fill="#000" />
<rect x="751" y="507" width="7" height="1" fill="#000" />
<rect x="703" y="516" width="7" height="1" fill="#000" />
<rect x="715" y="516" width="7" height="1" fill="#000" />
<rect x="727" y="516" width="7" height="1" fill="#000" />
<rect x="739" y="516" width="7" height="1" fill="#000" />
<rect x="751" y="516" width="7" height="1" fill="#000" />
<rect x="700" y="569" width="61" height="9" fill="#000" />
<rect x="700" y="579" width="61" height="9" fill="#76933c" />
<rect x="700" y="588" width="61" height="9" fill="#9bbb59" />
<rect x="700" y="597" width="61" height="9" fill="#76933c" />
<rect x="700" y="606" width="61" height="9" fill="#9bbb59" />
<rect x="703" y="573" width="7" height="1" fill="#ffffff" />
<rect x="715" y="573" width="7" height="1" fill="#ffffff" />
<rect x="727" y="573" width="7" height="1" fill="#ffffff" />
<rect x="739" y="573" width="7" height="1" fill="#ffffff" />
<rect x="751" y="573" width="7" height="1" fill="#ffffff" />
<rect x="703" y="582" width="7" height="1" fill="#ffffff" />
<rect x="715" y="582" width="7" height="1" fill="#ffffff" />
<rect x="727" y="582" width="7" height="1" fill="#ffffff" />
<rect x="739" y="582" width="7" height="1" fill="#ffffff" />
<rect x="751" y="582" width="7" height="1" fill="#ffffff" />
<rect x="703" y="591" width="7" height="1" fill="#ffffff" />
<rect x="715" y="591" width="7" height="1" fill="#ffffff" />
<rect x="727" y="591" width="7" height="1" fill="#ffffff" />
<rect x="739" y="591" width="7" height="1" fill="#ffffff" />
<rect x="751" y="591" width="7" height="1" fill="#ffffff" />
<rect x="703" y="600" width="7" height="1" fill="#ffffff" />
<rect x="715" y="600" width="7" height="1" fill="#ffffff" />
<rect x="727" y="600" width="7" height="1" fill="#ffffff" />
<rect x="739" y="600" width="7" height="1" fill="#ffffff" />
<rect x="751" y="600" width="7" height="1" fill="#ffffff" />
<rect x="703" y="609" width="7" height="1" fill="#ffffff" />
<rect x="715" y="609" width="7" height="1" fill="#ffffff" />
<rect x="727" y="609" width="7" height="1" fill="#ffffff" />
<rect x="739" y="609" width="7" height="1" fill="#ffffff" />
<rect x="751" y="609" width="7" height="1" fill="#ffffff" />
<rect x="769" y="123" width="61" height="9" fill="#fde9d9" />
<rect x="769" y="141" width="61" height="9" fill="#fde9d9" />
<rect x="769" y="113" width="61" height="1" fill="#f79646" />
<rect x="769" y="122" width="61" height="1" fill="#f79646" />
<rect x="769" y="158" width="61" height="1" fill="#f79646" />
<rect x="772" y="117" width="7" height="1" fill="#e26b0a" />
<rect x="784" y="117" width="7" height="1" fill="#e26b0a" />
<rect x="796" y="117" width="7" height="1" fill="#e26b0a" />
<rect x="808" y="117" width="7" height="1" fill="#e26b0a" />
<rect x="820" y="117" width="7" height="1" fill="#e26b0a" />
<rect x="772" y="126" width="7" height="1" fill="#e26b0a" />
<rect x="784" y="126" width="7" height="1" fill="#e26b0a" />
<rect x="796" y="126" width="7" height="1" fill="#e26b0a" />
<rect x="808" y="126" width="7" height="1" fill="#e26b0a" />
<rect x="820" y="126" width="7" height="1" fill="#e26b0a" />
<rect x="772" y="135" width="7" height="1" fill="#e26b0a" />
<rect x="784" y="135" width="7" height="1" fill="#e26b0a" />
<rect x="796" y="135" width="7" height="1" fill="#e26b0a" />
<rect x="808" y="135" width="7" height="1" fill="#e26b0a" />
<rect x="820" y="135" width="7" height="1" fill="#e26b0a" />
<rect x="772" y="144" width="7" height="1" fill="#e26b0a" />
<rect x="784" y="144" width="7" height="1" fill="#e26b0a" />
<rect x="796" y="144" width="7" height="1" fill="#e26b0a" />
<rect x="808" y="144" width="7" height="1" fill="#e26b0a" />
<rect x="820" y="144" width="7" height="1" fill="#e26b0a" />
<rect x="772" y="153" width="7" height="1" fill="#e26b0a" />
<rect x="784" y="153" width="7" height="1" fill="#e26b0a" />
<rect x="796" y="153" width="7" height="1" fill="#e26b0a" />
<rect x="808" y="153" width="7" height="1" fill="#e26b0a" />
<rect x="820" y="153" width="7" height="1" fill="#e26b0a" />
<rect x="769" y="167" width="61" height="10" fill="#f79646" />
<rect x="769" y="185" width="61" height="1" fill="#f79646" />
<rect x="769" y="194" width="61" height="1" fill="#f79646" />
<rect x="769" y="203" width="61" height="1" fill="#f79646" />
<rect x="769.5" y="167.5" width="60" height="45" fill="none" stroke="#f79646" stroke-width="1"/>
<rect x="772" y="171" width="7" height="1" fill="#ffffff" />
<rect x="784" y="171" width="7" height="1" fill="#ffffff" />
<rect x="796" y="171" width="7" height="1" fill="#ffffff" />
<rect x="808" y="171" width="7" height="1" fill="#ffffff" />
<rect x="820" y="171" width="7" height="1" fill="#ffffff" />
<rect x="772" y="180" width="7" height="1" fill="#000" />
<rect x="784" y="180" width="7" height="1" fill="#000" />
<rect x="796" y="180" width="7" height="1" fill="#000" />
<rect x="808" y="180" width="7" height="1" fill="#000" />
<rect x="820" y="180" width="7" height="1" fill="#000" />
<rect x="772" y="189" width="7" height="1" fill="#000" />
<rect x="784" y="189" width="7" height="1" fill="#000" />
<rect x="796" y="189" width="7" height="1" fill="#000" />
<rect x="808" y="189" width="7" height="1" fill="#000" />
<rect x="820" y="189" width="7" height="1" fill="#000" />
<rect x="772" y="198" width="7" height="1" fill="#000" />
<rect x="784" y="198" width="7" height="1" fill="#000" />
<rect x="796" y="198" width="7" height="1" fill="#000" />
<rect x="808" y="198" width="7" height="1" fill="#000" />
<rect x="820" y="198" width="7" height="1" fill="#000" />
<rect x="772" y="207" width="7" height="1" fill="#000" />
<rect x="784" y="207" width="7" height="1" fill="#000" />
<rect x="796" y="207" width="7" height="1" fill="#000" />
<rect x="808" y="207" width="7" height="1" fill="#000" />
<rect x="820" y="207" width="7" height="1" fill="#000" />
<rect x="769" y="230" width="61" height="9" fill="#fde9d9" />
<rect x="769" y="248" width="61" height="9" fill="#fde9d9" />
<rect x="769" y="230" width="61" height="1" fill="#f79646" />
<rect x="769" y="239" width="61" height="1" fill="#f79646" />
<rect x="769" y="248" width="61" height="1" fill="#f79646" />
<rect x="769" y="257" width="61" height="1" fill="#f79646" />
<rect x="781" y="221" width="1" height="46" fill="#f79646" />
<rect x="793" y="221" width="1" height="46" fill="#f79646" />
<rect x="805" y="221" width="1" height="46" fill="#f79646" />
<rect x="817" y="221" width="1" height="46" fill="#f79646" />
<rect x="769.5" y="221.5" width="60" height="45" fill="none" stroke="#f79646" stroke-width="1"/>
<rect x="772" y="225" width="7" height="1" fill="#000" />
<rect x="784" y="225" width="7" height="1" fill="#000" />
<rect x="796" y="225" width="7" height="1" fill="#000" />
<rect x="808" y="225" width="7" height="1" fill="#000" />
<rect x="820" y="225" width="7" height="1" fill="#000" />
<rect x="772" y="234" width="7" height="1" fill="#000" />
<rect x="784" y="234" width="7" height="1" fill="#000" />
<rect x="796" y="234" width="7" height="1" fill="#000" />
<rect x="808" y="234" width="7" height="1" fill="#000" />
<rect x="820" y="234" width="7" height="1" fill="#000" />
<rect x="772" y="243" width="7" height="1" fill="#000" />
<rect x="784" y="243" width="7" height="1" fill="#000" />
<rect x="796" y="243" width="7" height="1" fill="#000" />
<rect x="808" y="243" width="7" height="1" fill="#000" />
<rect x="820" y="243" width="7" height="1" fill="#000" />
<rect x="772" y="252" width="7" height="1" fill="#000" />
<rect x="784" y="252" width="7" height="1" fill="#000" />
<rect x="796" y="252" width="7" height="1" fill="#000" />
<rect x="808" y="252" width="7" height="1" fill="#000" />
<rect x="820" y="252" width="7" height="1" fill="#000" />
<rect x="772" y="261" width="7" height="1" fill="#000" />
<rect x="784" y="261" width="7" height="1" fill="#000" />
<rect x="796" y="261" width="7" height="1" fill="#000" />
<rect x="808" y="261" width="7" height="1" fill="#000" />
<rect x="820" y="261" width="7" height="1" fill="#000" />
<rect x="769" y="314" width="61" height="10" fill="#f79646" />
<rect x="769" y="324" width="61" height="8" fill="#fde9d9" />
<rect x="769" y="342" width="61" height="8" fill="#fde9d9" />
<rect x="769" y="332" width="61" height="1" fill="#fabf8f" />
<rect x="769" y="341" width="61" height="1" fill="#fabf8f" />
<rect x="769" y="350" width="61" height="1" fill="#fabf8f" />
<rect x="769.5" y="314.5" width="60" height="45" fill="none" stroke="#fabf8f" stroke-width="1"/>
<rect x="772" y="318" width="7" height="1" fill="#ffffff" />
<rect x="784" y="318" width="7" height="1" fill="#ffffff" />
<rect x="796" y="318" width="7" height="1" fill="#ffffff" />
<rect x="808" y="318" width="7" height="1" fill="#ffffff" />
<rect x="820" y="318" width="7" height="1" fill="#ffffff" />
<rect x="772" y="327" width="7" height="1" fill="#000" />
<rect x="784" y="327" width="7" height="1" fill="#000" />
<rect x="796" y="327" width="7" height="1" fill="#000" />
<rect x="808" y="327" width="7" height="1" fill="#000" />
<rect x="820" y="327" width="7" height="1" fill="#000" />
<rect x="772" y="336" width="7" height="1" fill="#000" />
<rect x="784" y="336" width="7" height="1" fill="#000" />
<rect x="796" y="336" width="7" height="1" fill="#000" />
<rect x="808" y="336" width="7" height="1" fill="#000" />
<rect x="820" y="336" width="7" height="1" fill="#000" />
<rect x="772" y="345" width="7" height="1" fill="#000" />
<rect x="784" y="345" width="7" height="1" fill="#000" />
<rect x="796" y="345" width="7" height="1" fill="#000" />
<rect x="808" y="345" width="7" height="1" fill="#000" />
<rect x="820" y="345" width="7" height="1" fill="#000" />
<rect x="772" y="354" width="7" height="1" fill="#000" />
<rect x="784" y="354" width="7" height="1" fill="#000" />
<rect x="796" y="354" width="7" height="1" fill="#000" />
<rect x="808" y="354" width="7" height="1" fill="#000" />
<rect x="820" y="354" width="7" height="1" fill="#000" />
<rect x="769" y="368" width="61" height="10" fill="#f79646" />
<rect x="769" y="377" width="61" height="10" fill="#fcd5b4" />
<rect x="769" y="386" width="61" height="10" fill="#fde9d9" />
<rect x="769" y="395" width="61" height="10" fill="#fcd5b4" />
<rect x="769" y="404" width="61" height="10" fill="#fde9d9" />
<rect x="769" y="377" width="61" height="1" fill="#ffffff" />
<rect x="769" y="386" width="61" height="1" fill="#ffffff" />
<rect x="769" y="395" width="61" height="1" fill="#ffffff" />
<rect x="769" y="404" width="61" height="1" fill="#ffffff" />
<rect x="781" y="368" width="1" height="46" fill="#ffffff" />
<rect x="793" y="368" width="1" height="46" fill="#ffffff" />
<rect x="805" y="368" width="1" height="46" fill="#ffffff" />
<rect x="817" y="368" width="1" height="46" fill="#ffffff" />
<rect x="772" y="372" width="7" height="1" fill="#ffffff" />
<rect x="784" y="372" width="7" height="1" fill="#ffffff" />
<rect x="796" y="372" width="7" height="1" fill="#ffffff" />
<rect x="808" y="372" width="7" height="1" fill="#ffffff" />
<rect x="820" y="372" width="7" height="1" fill="#ffffff" />
<rect x="772" y="381" width="7" height="1" fill="#000" />
<rect x="784" y="381" width="7" height="1" fill="#000" />
<rect x="796" y="381" width="7" height="1" fill="#000" />
<rect x="808" y="381" width="7" height="1" fill="#000" />
<rect x="820" y="381" width="7" height="1" fill="#000" />
<rect x="772" y="390" width="7" height="1" fill="#000" />
<rect x="784" y="390" width="7" height="1" fill="#000" />
<rect x="796" y="390" width="7" height="1" fill="#000" />
<rect x="808" y="390" width="7" height="1" fill="#000" />
<rect x="820" y="390" width="7" height="1" fill="#000" />
<rect x="772" y="399" width="7" height="1" fill="#000" />
<rect x="784" y="399" width="7" height="1" fill="#000" />
<rect x="796" y="399" width="7" height="1" fill="#000" />
<rect x="808" y="399" width="7" height="1" fill="#000" />
<rect x="820" y="399" width="7" height="1" fill="#000" />
<rect x="772" y="408" width="7" height="1" fill="#000" />
<rect x="784" y="408" width="7" height="1" fill="#000" />
<rect x="796" y="408" width="7" height="1" fill="#000" />
<rect x="808" y="408" width="7" height="1" fill="#000" />
<rect x="820" y="408" width="7" height="1" fill="#000" />
<rect x="769" y="422" width="61" height="1" fill="#000" />
<rect x="769" y="423" width="61" height="8" fill="#f79646" />
<rect x="769" y="431" width="61" height="1" fill="#000" />
<rect x="769" y="432" width="61" height="9" fill="#d9d9d9" />
<rect x="769" y="450" width="61" height="9" fill="#d9d9d9" />
<rect x="769" y="467" width="61" height="1" fill="#000" />
<rect x="772" y="426" width="7" height="1" fill="#fff" />
<rect x="784" y="426" width="7" height="1" fill="#fff" />
<rect x="796" y="426" width="7" height="1" fill="#fff" />
<rect x="808" y="426" width="7" height="1" fill="#fff" />
<rect x="820" y="426" width="7" height="1" fill="#fff" />
<rect x="772" y="435" width="7" height="1" fill="#000" />
<rect x="784" y="435" width="7" height="1" fill="#000" />
<rect x="796" y="435" width="7" height="1" fill="#000" />
<rect x="808" y="435" width="7" height="1" fill="#000" />
<rect x="820" y="435" width="7" height="1" fill="#000" />
<rect x="772" y="444" width="7" height="1" fill="#000" />
<rect x="784" y="444" width="7" height="1" fill="#000" />
<rect x="796" y="444" width="7" height="1" fill="#000" />
<rect x="808" y="444" width="7" height="1" fill="#000" />
<rect x="820" y="444" width="7" height="1" fill="#000" />
<rect x="772" y="453" width="7" height="1" fill="#000" />
<rect x="784" y="453" width="7" height="1" fill="#000" />
<rect x="796" y="453" width="7" height="1" fill="#000" />
<rect x="808" y="453" width="7" height="1" fill="#000" />
<rect x="820" y="453" width="7" height="1" fill="#000" />
<rect x="772" y="462" width="7" height="1" fill="#000" />
<rect x="784" y="462" width="7" height="1" fill="#000" />
<rect x="796" y="462" width="7" height="1" fill="#000" />
<rect x="808" y="462" width="7" height="1" fill="#000" />
<rect x="820" y="462" width="7" height="1" fill="#000" />
<rect x="769" y="476" width="61" height="9" fill="#fde9d9" />
<rect x="769" y="485" width="61" height="9" fill="#fcd5b4" />
<rect x="769" y="494" width="61" height="9" fill="#fde9d9" />
<rect x="769" y="503" width="61" height="9" fill="#fcd5b4" />
<rect x="769" y="512" width="61" height="9" fill="#fde9d9" />
<rect x="769" y="485" width="61" height="1" fill="#fabf8f" />
<rect x="769" y="494" width="61" height="1" fill="#fabf8f" />
<rect x="769" y="503" width="61" height="1" fill="#fabf8f" />
<rect x="769" y="512" width="61" height="1" fill="#fabf8f" />
<rect x="781" y="476" width="1" height="46" fill="#fabf8f" />
<rect x="793" y="476" width="1" height="46" fill="#fabf8f" />
<rect x="805" y="476" width="1" height="46" fill="#fabf8f" />
<rect x="817" y="476" width="1" height="46" fill="#fabf8f" />
<rect x="769.5" y="476.5" width="60" height="45" fill="none" stroke="#fabf8f" stroke-width="1"/>
<rect x="772" y="480" width="7" height="1" fill="#000" />
<rect x="784" y="480" width="7" height="1" fill="#000" />
<rect x="796" y="480" width="7" height="1" fill="#000" />
<rect x="808" y="480" width="7" height="1" fill="#000" />
<rect x="820" y="480" width="7" height="1" fill="#000" />
<rect x="772" y="489" width="7" height="1" fill="#000" />
<rect x="784" y="489" width="7" height="1" fill="#000" />
<rect x="796" y="489" width="7" height="1" fill="#000" />
<rect x="808" y="489" width="7" height="1" fill="#000" />
<rect x="820" y="489" width="7" height="1" fill="#000" />
<rect x="772" y="498" width="7" height="1" fill="#000" />
<rect x="784" y="498" width="7" height="1" fill="#000" />
<rect x="796" y="498" width="7" height="1" fill="#000" />
<rect x="808" y="498" width="7" height="1" fill="#000" />
<rect x="820" y="498" width="7" height="1" fill="#000" />
<rect x="772" y="507" width="7" height="1" fill="#000" />
<rect x="784" y="507" width="7" height="1" fill="#000" />
<rect x="796" y="507" width="7" height="1" fill="#000" />
<rect x="808" y="507" width="7" height="1" fill="#000" />
<rect x="820" y="507" width="7" height="1" fill="#000" />
<rect x="772" y="516" width="7" height="1" fill="#000" />
<rect x="784" y="516" width="7" height="1" fill="#000" />
<rect x="796" y="516" width="7" height="1" fill="#000" />
<rect x="808" y="516" width="7" height="1" fill="#000" />
<rect x="820" y="516" width="7" height="1" fill="#000" />
<rect x="769" y="569" width="61" height="9" fill="#000" />
<rect x="769" y="579" width="61" height="9" fill="#e26b0a" />
<rect x="769" y="588" width="61" height="9" fill="#f79646" />
<rect x="769" y="597" width="61" height="9" fill="#e26b0a" />
<rect x="769" y="606" width="61" height="9" fill="#f79646" />
<rect x="772" y="573" width="7" height="1" fill="#ffffff" />
<rect x="784" y="573" width="7" height="1" fill="#ffffff" />
<rect x="796" y="573" width="7" height="1" fill="#ffffff" />
<rect x="808" y="573" width="7" height="1" fill="#ffffff" />
<rect x="820" y="573" width="7" height="1" fill="#ffffff" />
<rect x="772" y="582" width="7" height="1" fill="#ffffff" />
<rect x="784" y="582" width="7" height="1" fill="#ffffff" />
<rect x="796" y="582" width="7" height="1" fill="#ffffff" />
<rect x="808" y="582" width="7" height="1" fill="#ffffff" />
<rect x="820" y="582" width="7" height="1" fill="#ffffff" />
<rect x="772" y="591" width="7" height="1" fill="#ffffff" />
<rect x="784" y="591" width="7" height="1" fill="#ffffff" />
<rect x="796" y="591" width="7" height="1" fill="#ffffff" />
<rect x="808" y="591" width="7" height="1" fill="#ffffff" />
<rect x="820" y="591" width="7" height="1" fill="#ffffff" />
<rect x="772" y="600" width="7" height="1" fill="#ffffff" />
<rect x="784" y="600" width="7" height="1" fill="#ffffff" />
<rect x="796" y="600" width="7" height="1" fill="#ffffff" />
<rect x="808" y="600" width="7" height="1" fill="#ffffff" />
<rect x="820" y="600" width="7" height="1" fill="#ffffff" />
<rect x="772" y="609" width="7" height="1" fill="#ffffff" />
<rect x="784" y="609" width="7" height="1" fill="#ffffff" />
<rect x="796" y="609" width="7" height="1" fill="#ffffff" />
<rect x="808" y="609" width="7" height="1" fill="#ffffff" />
<rect x="820" y="609" width="7" height="1" fill="#ffffff" />
<rect x="493" y="623" width="61" height="10" fill="#000000" />
<rect x="493" y="633" width="61" height="9" fill="#a6a6a6" />
<rect x="493" y="642" width="61" height="9" fill="#d9d9d9" />
<rect x="493" y="651" width="61" height="9" fill="#a6a6a6" />
<rect x="493" y="660" width="61" height="9" fill="#d9d9d9" />
<rect x="496" y="627" width="7" height="1" fill="#ffffff" />
<rect x="508" y="627" width="7" height="1" fill="#ffffff" />
<rect x="520" y="627" width="7" height="1" fill="#ffffff" />
<rect x="532" y="627" width="7" height="1" fill="#ffffff" />
<rect x="544" y="627" width="7" height="1" fill="#ffffff" />
<rect x="496" y="636" width="7" height="1" fill="#000" />
<rect x="508" y="636" width="7" height="1" fill="#000" />
<rect x="520" y="636" width="7" height="1" fill="#000" />
<rect x="532" y="636" width="7" height="1" fill="#000" />
<rect x="544" y="636" width="7" height="1" fill="#000" />
<rect x="496" y="645" width="7" height="1" fill="#000" />
<rect x="508" y="645" width="7" height="1" fill="#000" />
<rect x="520" y="645" width="7" height="1" fill="#000" />
<rect x="532" y="645" width="7" height="1" fill="#000" />
<rect x="544" y="645" width="7" height="1" fill="#000" />
<rect x="496" y="654" width="7" height="1" fill="#000" />
<rect x="508" y="654" width="7" height="1" fill="#000" />
<rect x="520" y="654" width="7" height="1" fill="#000" />
<rect x="532" y="654" width="7" height="1" fill="#000" />
<rect x="544" y="654" width="7" height="1" fill="#000" />
<rect x="496" y="663" width="7" height="1" fill="#000" />
<rect x="508" y="663" width="7" height="1" fill="#000" />
<rect x="520" y="663" width="7" height="1" fill="#000" />
<rect x="532" y="663" width="7" height="1" fill="#000" />
<rect x="544" y="663" width="7" height="1" fill="#000" />
<rect x="562" y="623" width="61" height="10" fill="#c0504d" />
<rect x="562" y="633" width="61" height="9" fill="#b8cce4" />
<rect x="562" y="642" width="61" height="9" fill="#dce6f1" />
<rect x="562" y="651" width="61" height="9" fill="#b8cce4" />
<rect x="562" y="660" width="61" height="9" fill="#dce6f1" />
<rect x="565" y="627" width="7" height="1" fill="#ffffff" />
<rect x="577" y="627" width="7" height="1" fill="#ffffff" />
<rect x="589" y="627" width="7" height="1" fill="#ffffff" />
<rect x="601" y="627" width="7" height="1" fill="#ffffff" />
<rect x="613" y="627" width="7" height="1" fill="#ffffff" />
<rect x="565" y="636" width="7" height="1" fill="#000" />
<rect x="577" y="636" width="7" height="1" fill="#000" />
<rect x="589" y="636" width="7" height="1" fill="#000" />
<rect x="601" y="636" width="7" height="1" fill="#000" />
<rect x="613" y="636" width="7" height="1" fill="#000" />
<rect x="565" y="645" width="7" height="1" fill="#000" />
<rect x="577" y="645" width="7" height="1" fill="#000" />
<rect x="589" y="645" width="7" height="1" fill="#000" />
<rect x="601" y="645" width="7" height="1" fill="#000" />
<rect x="613" y="645" width="7" height="1" fill="#000" />
<rect x="565" y="654" width="7" height="1" fill="#000" />
<rect x="577" y="654" width="7" height="1" fill="#000" />
<rect x="589" y="654" width="7" height="1" fill="#000" />
<rect x="601" y="654" width="7" height="1" fill="#000" />
<rect x="613" y="654" width="7" height="1" fill="#000" />
<rect x="565" y="663" width="7" height="1" fill="#000" />
<rect x="577" y="663" width="7" height="1" fill="#000" />
<rect x="589" y="663" width="7" height="1" fill="#000" />
<rect x="601" y="663" width="7" height="1" fill="#000" />
<rect x="613" y="663" width="7" height="1" fill="#000" />
<rect x="631" y="623" width="61" height="10" fill="#8064a2" />
<rect x="631" y="633" width="61" height="9" fill="#d8e4bc" />
<rect x="631" y="642" width="61" height="9" fill="#ebf1de" />
<rect x="631" y="651" width="61" height="9" fill="#d8e4bc" />
<rect x="631" y="660" width="61" height="9" fill="#ebf1de" />
<rect x="634" y="627" width="7" height="1" fill="#ffffff" />
<rect x="646" y="627" width="7" height="1" fill="#ffffff" />
<rect x="658" y="627" width="7" height="1" fill="#ffffff" />
<rect x="670" y="627" width="7" height="1" fill="#ffffff" />
<rect x="682" y="627" width="7" height="1" fill="#ffffff" />
<rect x="634" y="636" width="7" height="1" fill="#000" />
<rect x="646" y="636" width="7" height="1" fill="#000" />
<rect x="658" y="636" width="7" height="1" fill="#000" />
<rect x="670" y="636" width="7" height="1" fill="#000" />
<rect x="682" y="636" width="7" height="1" fill="#000" />
<rect x="634" y="645" width="7" height="1" fill="#000" />
<rect x="646" y="645" width="7" height="1" fill="#000" />
<rect x="658" y="645" width="7" height="1" fill="#000" />
<rect x="670" y="645" width="7" height="1" fill="#000" />
<rect x="682" y="645" width="7" height="1" fill="#000" />
<rect x="634" y="654" width="7" height="1" fill="#000" />
<rect x="646" y="654" width="7" height="1" fill="#000" />
<rect x="658" y="654" width="7" height="1" fill="#000" />
<rect x="670" y="654" width="7" height="1" fill="#000" />
<rect x="682" y="654" width="7" height="1" fill="#000" />
<rect x="634" y="663" width="7" height="1" fill="#000" />
<rect x="646" y="663" width="7" height="1" fill="#000" />
<rect x="658" y="663" width="7" height="1" fill="#000" />
<rect x="670" y="663" width="7" height="1" fill="#000" />
<rect x="682" y="663" width="7" height="1" fill="#000" />
<rect x="700" y="623" width="61" height="10" fill="#f79646" />
<rect x="700" y="633" width="61" height="9" fill="#b7dee8" />
<rect x="700" y="642" width="61" height="9" fill="#daeef3" />
<rect x="700" y="651" width="61" height="9" fill="#b7dee8" />
<rect x="700" y="660" width="61" height="9" fill="#daeef3" />
<rect x="703" y="627" width="7" height="1" fill="#ffffff" />
<rect x="715" y="627" width="7" height="1" fill="#ffffff" />
<rect x="727" y="627" width="7" height="1" fill="#ffffff" />
<rect x="739" y="627" width="7" height="1" fill="#ffffff" />
<rect x="751" y="627" width="7" height="1" fill="#ffffff" />
<rect x="703" y="636" width="7" height="1" fill="#000" />
<rect x="715" y="636" width="7" height="1" fill="#000" />
<rect x="727" y="636" width="7" height="1" fill="#000" />
<rect x="739" y="636" width="7" height="1" fill="#000" />
<rect x="751" y="636" width="7" height="1" fill="#000" />
<rect x="703" y="645" width="7" height="1" fill="#000" />
<rect x="715" y="645" width="7" height="1" fill="#000" />
<rect x="727" y="645" width="7" height="1" fill="#000" />
<rect x="739" y="645" width="7" height="1" fill="#000" />
<rect x="751" y="645" width="7" height="1" fill="#000" />
<rect x="703" y="654" width="7" height="1" fill="#000" />
<rect x="715" y="654" width="7" height="1" fill="#000" />
<rect x="727" y="654" width="7" height="1" fill="#000" />
<rect x="739" y="654" width="7" height="1" fill="#000" />
<rect x="751" y="654" width="7" height="1" fill="#000" />
<rect x="703" y="663" width="7" height="1" fill="#000" />
<rect x="715" y="663" width="7" height="1" fill="#000" />
<rect x="727" y="663" width="7" height="1" fill="#000" />
<rect x="739" y="663" width="7" height="1" fill="#000" />
<rect x="751" y="663" width="7" height="1" fill="#000" />
<path d="M507.6 690.5 H516.5 V703.5 H501.5 V696" stroke="#333" fill="none" stroke-width="1.1" />
<path d="M511.5 690.5 V694 M501.5 699.5 H506" stroke="#555" fill="none" stroke-width="1" />
<rect x="506.5" y="694.5" width="10" height="9" fill="#9ec8f0" stroke="#1e6fc5" stroke-width="1.2"/>
<path d="M511.5 694.5 V703.5 M506.5 699 H516.5" stroke="#1e6fc5" fill="none" stroke-width="1.1" />
<path d="M504.3 689.2 V695.6 M501 692.3 H507.6" stroke="#1f9a3a" fill="none" stroke-width="1.3" />
<text x="526" y="702.2" font-size="12.5" fill="#262626" textLength="92" lengthAdjust="spacingAndGlyphs" >New Table Style...</text>
<rect x="526" y="703" width="9" height="1" fill="#262626" />
<rect x="507" y="722" width="9.5" height="10" fill="#f0f0f0" />
<path d="M507.6 717.5 H516.5 V732.5 H501.5 V724" stroke="#333" fill="none" stroke-width="1.1" />
<path d="M504.3 717 V723.5 M501 720.2 H507.6" stroke="#1f9a3a" fill="none" stroke-width="1.3" />
<rect x="509.5" y="719.5" width="5" height="1.6" fill="none" stroke="#777" stroke-width="0.9"/>
<rect x="503.6" y="725.3" width="1.6" height="5" fill="none" stroke="#777" stroke-width="0.9"/>
<path d="M510 729.3 H513.6 V724.5" stroke="#2b88d8" fill="none" stroke-width="1.3" />
<path d="M511 727.8 L509 729.3 L511 730.8 Z M512.1 725 L513.6 723 L515.1 725 Z" stroke="#2b88d8" fill="#2b88d8" stroke-width="0.8" />
<text x="526" y="730" font-size="12.5" fill="#262626" textLength="119.5" lengthAdjust="spacingAndGlyphs" >New PivotTable Style...</text>
<rect x="553" y="731" width="7" height="1" fill="#262626" />
<rect x="729.5" y="742" width="1.6" height="1.6" fill="#8a96a3" />
<rect x="734.5" y="742" width="1.6" height="1.6" fill="#8a96a3" />
<rect x="739.5" y="742" width="1.6" height="1.6" fill="#8a96a3" />
<rect x="744.5" y="742" width="1.6" height="1.6" fill="#8a96a3" />
</svg>
</body></html>
